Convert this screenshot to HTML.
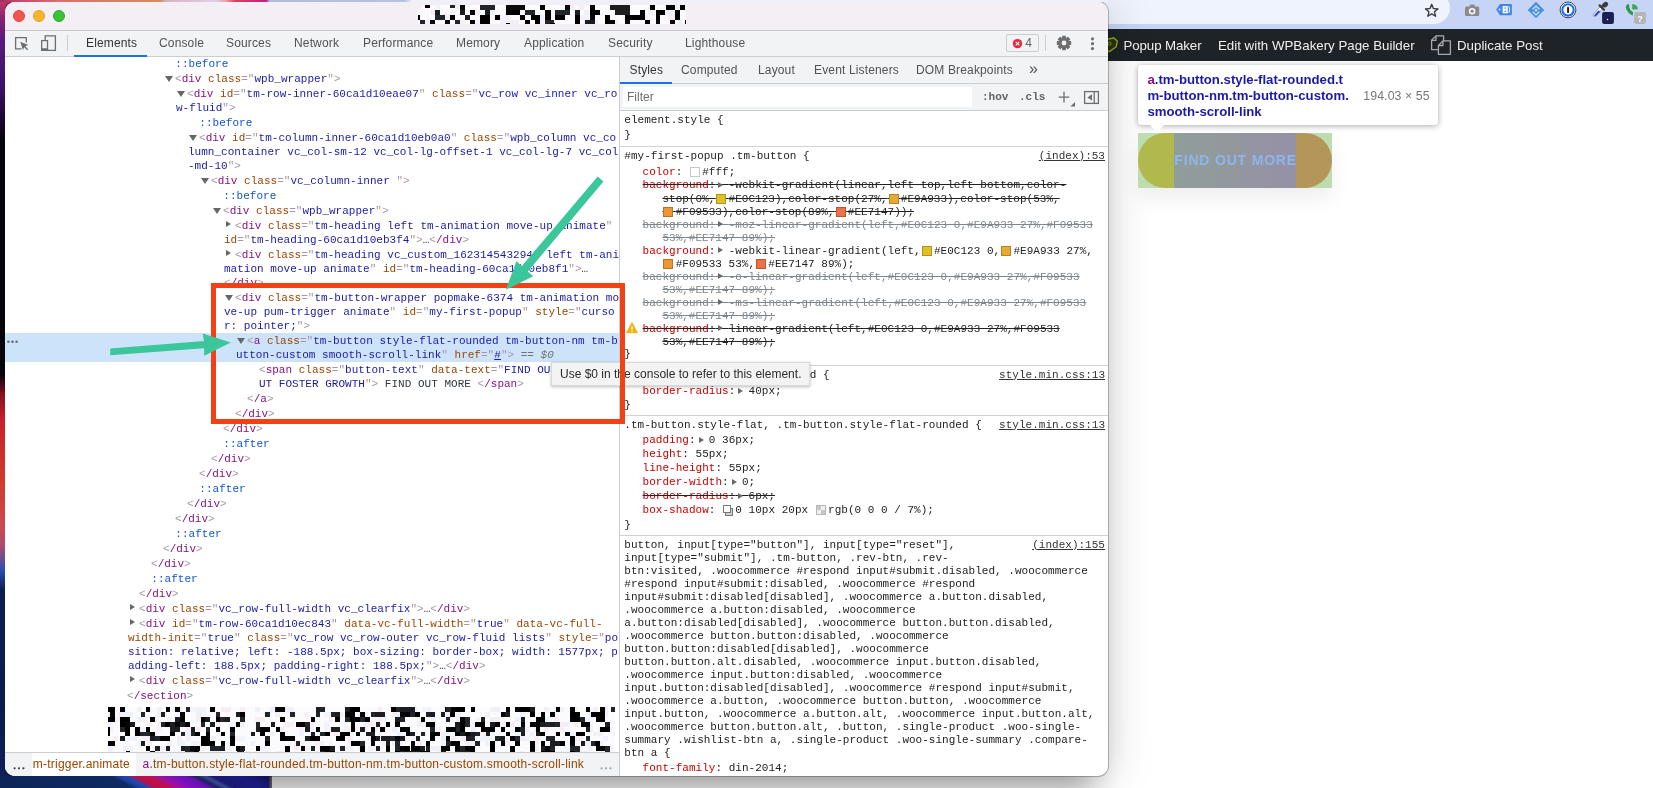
<!DOCTYPE html>
<html><head><meta charset="utf-8"><title>DevTools</title>
<style>
*{box-sizing:border-box}
html,body{margin:0;padding:0}
html{width:1653px;height:788px;overflow:hidden}
body{width:1653px;height:788px;overflow:hidden;position:relative;background:#fff;font-family:"Liberation Sans",sans-serif;font-size:12px;color:#333}
.abs{position:absolute}
/* wallpaper */
#wpL{left:0;top:0;width:14px;height:788px;background:linear-gradient(180deg,#c23c64 0,#8a2470 18px,#5a1a80 40px,#3c1064 90px,#1a0830 120px,#08040c 140px,#08040c 375px,#8a1020 395px,#c8202c 420px,#d03a2c 480px,#cc4a50 525px,#b04a70 545px,#2a50b0 570px,#0e1c50 590px,#0c1a4c 700px,#16286a 788px)}
#wpT{left:0;top:0;width:1120px;height:12px;background:linear-gradient(90deg,#a02a6a 0,#c8406a 14px,#d8706a 60px,#d98a5a 160px,#dcb0c0 166px,#e0d0e8 215px,#e8a0b0 226px,#e04060 235px,#c02080 266px,#aebde2 270px,#b4c2e6 405px,#eef1fa 412px,#eef1fa 1120px)}
#wpB{left:0;top:765px;width:272px;height:23px;background:linear-gradient(90deg,#0d2458 0,#10306a 95px,#1c3c90 116px,#8a1858 127px,#c01048 138px,#a010a0 156px,#7a10b0 185px,#2a1a60 200px,#1c1a48 230px,#2a2858 268px,#777 272px)}
#wpL2{left:0;top:0;width:5px;height:788px;background:linear-gradient(180deg,#c23c64 0,#8a2470 18px,#5a1a80 40px,#3c1064 90px,#1a0830 120px,#08040c 140px,#08040c 375px,#8a1020 395px,#c8202c 420px,#d03a2c 480px,#cc4a50 525px,#b04a70 545px,#2a50b0 570px,#0e1c50 590px,#0c1a4c 700px,#10205a 788px)}
#wpT2{left:0;top:0;width:1108px;height:2px;background:linear-gradient(90deg,#a02a6a 0,#c8406a 14px,#d8706a 60px,#d98a5a 160px,#dcb0c0 166px,#e0d0e8 215px,#e8a0b0 226px,#e04060 235px,#c02080 266px,#aebde2 270px,#b4c2e6 405px,#eef1fa 412px,#eef1fa 1108px)}
#wpB2w{left:0;top:776px;width:269px;height:13px;overflow:hidden}
#wpB2{left:-40px;top:0;width:340px;height:13px;transform-origin:0 0;transform:skewX(62deg);background:linear-gradient(90deg,#0d2458 0,#0e2a60 150px,#1a40a0 158px,#2048b0 166px,#b8104a 174px,#c01048 186px,#a010a0 198px,#7a10c0 212px,#6a10b0 226px,#1a2060 236px,#3a4a90 244px,#1a1a70 252px,#1a1a80 280px,#101050 310px,#101050 340px)}
/* browser right side */
#brTop{left:1100px;top:0;width:553px;height:29px;background:#c6d4f6}
#omni{left:1000px;top:-8px;width:450px;height:32px;background:#eff3fd;border-radius:0 16px 16px 0}
#blueband{display:none}
#admin{will-change:transform;left:1100px;top:29px;width:553px;height:32px;background:#1d2327;color:#f0f0f1;font-size:13.3px;line-height:32px;white-space:nowrap}
#admin span{position:absolute;top:0.7px}
/* devtools window */
#win{will-change:transform;left:5px;top:2px;width:1103px;height:774px;border-radius:10px;background:#fff;box-shadow:0 0 0 1px rgba(0,0,0,.25),0 2px 48px rgba(0,0,0,.18),0 28px 30px -14px rgba(0,0,0,.31);overflow:hidden}
#title{left:0;top:0;width:1103px;height:28px;background:#f3eff5}
#titleline{left:0;top:28px;width:1103px;height:1px;background:#c9c9cc}
.tl{position:absolute;top:8px;width:12px;height:12px;border-radius:50%}
#toolbar{left:0;top:29px;width:1103px;height:26px;background:#f1f3f4;border-bottom:1px solid #cacdd1}
.tab{position:absolute;top:0;height:26px;line-height:25px;font-size:12px;color:#505357;white-space:nowrap;letter-spacing:0.15px}
.tab.sel{color:#333}

#tree{left:0;top:54px;width:614px;height:690px;font-family:"Liberation Mono",monospace;font-size:11px;line-height:14px;white-space:pre;color:#303942;letter-spacing:0.02px}
.nd{position:absolute;left:0;width:614px}
.t{color:#881280}.b{color:#a894a6}.n{color:#994500}.v{color:#1a1aa6}.p{color:#1155cc}.x{color:#303942}
.g{color:#737373;font-style:italic}
.ar{position:absolute;width:0;height:0}
.ard{border-left:4px solid transparent;border-right:4px solid transparent;border-top:6px solid #666}
.arr{border-top:3.8px solid transparent;border-bottom:3.8px solid transparent;border-left:5.8px solid #666}
#selrow{left:0;top:277px;width:614px;height:29px;background:#cde3f9}

#crumbs{left:0;top:750px;width:614px;height:24px;background:#fff;border-top:1px solid #cacdd1;font-size:12px;line-height:22px;white-space:nowrap;color:#994500;letter-spacing:0.21px}
#crumbs div{position:absolute;top:0;height:23px}
.pix{position:absolute}
#tip0{will-change:transform;left:551px;top:362px;width:259px;height:24px;background:#f3f3f3;border:1px solid #d9d9d9;box-shadow:0 1px 3px rgba(0,0,0,.25);font-size:12px;line-height:22px;color:#2b2b2b;padding-left:8px;white-space:nowrap}
#redbox{left:211px;top:283px;width:414px;height:141px;border:5px solid #f24115}
#itip{will-change:transform;left:1138px;top:65px;width:300px;height:60px;background:#fff;border-radius:3px;box-shadow:0 1px 6px rgba(0,0,0,.32),0 0 1px rgba(0,0,0,.2)}
#itip .nm{position:absolute;left:9.4px;top:7px;font-weight:bold;font-size:13.2px;line-height:16px;color:#1a1aa6;white-space:pre}
#itip .dm{position:absolute;left:225.3px;top:23px;font-size:12.3px;letter-spacing:0.1px;line-height:16px;color:#777;white-space:pre}
#hl{will-change:transform;left:1138px;top:133px;width:194px;height:55px;background:#bfdcb0;overflow:hidden;box-shadow:0 10px 20px rgba(0,0,0,.07)}

#vdiv{left:614px;top:55px;width:1px;height:721px;background:#cacdd1}
#subtabs{left:615px;top:55px;width:488px;height:27px;background:#f1f3f4;border-bottom:1px solid #cacdd1}
#subtabs .tab{height:26px;line-height:26.4px}
#filterbar{left:615px;top:82px;width:488px;height:27px;background:#f1f3f4;border-bottom:1px solid #cacdd1}
#filterinput{left:3px;top:3px;width:349px;height:20px;background:#fff;color:#6e6e6e;font-size:12px;line-height:20px;padding-left:4px}
#sty{left:615px;top:0;width:488px;height:773px;font-family:"Liberation Mono",monospace;font-size:11px;line-height:13px;white-space:pre;color:#222;letter-spacing:0.02px}
.sl{position:absolute;height:13px}
.sep{position:absolute;left:0;width:488px;height:1px;background:#d0d3d6}
.pn{color:#c80000}
.st{text-decoration:line-through}
.in{color:#7d868c}.in .pn{color:#7d868c}
.src{position:absolute;right:3px;text-decoration:underline;color:#333}
.as{position:relative}
.as i{position:absolute;left:3px;top:2.6px;width:0;height:0;border-top:3.7px solid transparent;border-bottom:3.7px solid transparent;border-left:5.6px solid #6a6a6a}
.sw{position:relative}
.sw i{position:absolute;left:1px;top:1px;width:10px;height:10px;border:1px solid rgba(0,0,0,.22);z-index:2}
.chk i{border:1px solid #b8b8b8;background-color:#efefef;background-image:linear-gradient(#c6c6c6,#c6c6c6),linear-gradient(#c6c6c6,#c6c6c6);background-size:4px 4px;background-position:0 0,4px 4px;background-repeat:no-repeat}
.shd i{width:8px;height:8px;border:1px solid #777;background:#fff}
.shd b{position:absolute;left:3.2px;top:3.2px;width:8px;height:8px;border:1px solid #777;background:#cfcfcf;z-index:1}
</style></head>
<body>
<div id="wpL" class="abs"></div><div id="wpT" class="abs"></div><div id="wpB" class="abs"></div>
<div id="brTop" class="abs"></div><div id="blueband" class="abs"></div><div id="omni" class="abs"></div>
<div id="admin" class="abs"><span style="left:23.5px;letter-spacing:-0.1px">Popup Maker</span><span style="left:118px">Edit with WPBakery Page Builder</span><span style="left:357px">Duplicate Post</span></div>
<svg class="abs" style="left:1100px;top:0" width="553" height="62" viewBox="1100 0 553 62">
<polygon points="1431.70,4.30 1433.40,8.55 1437.98,8.86 1434.46,11.80 1435.58,16.24 1431.70,13.80 1427.82,16.24 1428.94,11.80 1425.42,8.86 1430.00,8.55" fill="none" stroke="#3c4043" stroke-width="1.4" stroke-linejoin="round"/>
<path d="M1466.5 6.6H1469.3L1470.4 4.6H1474L1475.1 6.6H1477.7Q1479.2 6.6 1479.2 8.1V14.4Q1479.2 15.9 1477.7 15.9H1466.5Q1465 15.9 1465 14.4V8.1Q1465 6.6 1466.5 6.6Z" fill="#8a8a8a"/><circle cx="1472.1" cy="11.2" r="3.3" fill="#f4f6fd"/><circle cx="1472.1" cy="11.2" r="1.6" fill="#8a8a8a"/>
<path d="M1496.2 9.5L1500 4H1510.6Q1511.9 4 1511.9 5.3V13.9Q1511.9 15.2 1510.6 15.2H1500Z" fill="#4285e8"/><circle cx="1499.6" cy="9.5" r=".9" fill="#fff"/><rect x="1502.6" y="6" width="5.2" height="7.3" fill="#f4f7fe"/><circle cx="1505.2" cy="8" r=".8" fill="#4285e8"/><circle cx="1505.2" cy="11.3" r=".8" fill="#4285e8"/><path d="M1508.9 6.3Q1510.4 9.6 1508.9 12.9" stroke="#fff" stroke-width="1" fill="none"/>
<path d="M1536 1.8L1544.2 10L1536 18.2L1527.8 10Z" fill="#4a8fe6"/><path d="M1532.6 9.2L1536 6L1539.4 9.2M1532.6 11.8L1536 15L1539.4 11.8" stroke="#d6e6fb" stroke-width="1.2" fill="none"/><path d="M1536 8.6L1537.5 10.2L1536 11.8L1534.5 10.2Z" fill="#d6e6fb"/>
<circle cx="1568" cy="9.9" r="7.9" fill="#fff" stroke="#1a1a1a" stroke-width=".8"/><circle cx="1568" cy="9.9" r="5.7" fill="#fff" stroke="#1a6ee8" stroke-width="2.1"/><rect x="1567.1" y="6.9" width="1.9" height="6" rx=".7" fill="#1a1a1a"/>
<path d="M1593.6 16.2L1593.2 14.4L1600 7L1602.2 9.1L1595.4 16.4Z" fill="#fff" stroke="#8a8a8a" stroke-width=".7" stroke-linejoin="round"/><path d="M1594 15.2L1598.6 10.3L1600.2 11.8L1595.6 16.5Z" fill="#2a44d8"/>
<path d="M1599.6 5.4L1604 9.8" stroke="#3a3a3a" stroke-width="2.2" stroke-linecap="round"/><path d="M1601.6 7.4L1604.2 4.4" stroke="#3a3a3a" stroke-width="2.6"/><ellipse cx="1605.3" cy="4.6" rx="3" ry="2.4" transform="rotate(-42 1605.3 4.6)" fill="#3a3a3a"/>
<rect x="1602.1" y="12" width="11.8" height="11.9" rx="2" fill="#1c1f52"/><circle cx="1607.5" cy="19.4" r=".75" fill="#fff"/>
<path d="M1626.9 4.6Q1625.2 6.5 1626.4 9.6Q1628.2 13.8 1632.6 15.8L1633.2 12.6Q1630 10.6 1629.3 7.4Q1629.4 5.6 1628.9 4.3Z" fill="#2a9a42"/><path d="M1632.2 4.1Q1637.3 4.3 1638 9.3L1632.3 9.4Z" fill="#35a84a"/>
<rect x="1634.2" y="12" width="11.7" height="11.9" rx="2" fill="#b5b5b5"/><text x="1640.1" y="21.6" font-family="Liberation Sans" font-size="9" font-weight="bold" fill="#fff" text-anchor="middle">?</text>
<path d="M1106.5 39.5L1113.6 37.8L1117.3 41L1116.2 46.8L1109.4 51.6L1105 49Z" fill="#2c3310" stroke="#9aae1e" stroke-width="1.3" stroke-linejoin="round"/><circle cx="1109.5" cy="43.6" r="1.5" fill="none" stroke="#9aae1e" stroke-width="1"/>
<g fill="#1d2327" stroke="#a7aaad" stroke-width="1.3" stroke-linejoin="round"><path d="M1436 35.9H1443.6V49.6H1431.6V40.3Z"/><path d="M1436 35.9V40.3H1431.6" fill="none"/><path d="M1443 40.9H1450.4V54.3H1438.4V45.5Z"/><path d="M1443 40.9V45.5H1438.4" fill="none"/></g>
</svg>
<div id="win" class="abs">
<div id="title" class="abs"><div class="tl" style="left:8px;background:#f4544f;border:0.5px solid #dd4842"></div><div class="tl" style="left:28px;background:#f6b429;border:0.5px solid #dfa023"></div><div class="tl" style="left:48px;background:#3cc13b;border:0.5px solid #2fa92e"></div></div>
<div id="titleline" class="abs"></div>
<div id="toolbar" class="abs"><div class="tab sel" style="left:81px">Elements</div><div class="tab" style="left:154px">Console</div><div class="tab" style="left:221px">Sources</div><div class="tab" style="left:289px">Network</div><div class="tab" style="left:358px">Performance</div><div class="tab" style="left:451px">Memory</div><div class="tab" style="left:519px">Application</div><div class="tab" style="left:603px">Security</div><div class="tab" style="left:680px">Lighthouse</div><div class="abs" style="left:69px;top:24px;width:73px;height:2px;background:#1a73e8"></div></div>
<div id="tree" class="abs"><div id="selrow" class="abs"></div>
<div class="nd" style="top:0px;padding:1px 0 0 159px;text-indent:11.3px"><span class="p">::before</span></div>
<div class="nd" style="top:15px;padding:1px 0 0 159px;text-indent:11.0px"><i class="ar ard" style="left:159.6px;top:5px"></i><span class="b">&lt;</span><span class="t">div </span><span class="n">class</span><span class="b">="</span><span class="v">wpb_wrapper</span><span class="b">"&gt;</span></div>
<div class="nd" style="top:30px;padding:1px 0 0 171px;text-indent:11.0px"><i class="ar ard" style="left:171.6px;top:5px"></i><span class="b">&lt;</span><span class="t">div </span><span class="n">id</span><span class="b">="</span><span class="v">tm-row-inner-60ca1d10eae07</span><span class="b">"</span><span class="n"> class</span><span class="b">="</span><span class="v">vc_row vc_inner vc_ro</span>
<span class="v">w-fluid</span><span class="b">"&gt;</span></div>
<div class="nd" style="top:59px;padding:1px 0 0 183px;text-indent:11.3px"><span class="p">::before</span></div>
<div class="nd" style="top:74px;padding:1px 0 0 183px;text-indent:11.0px"><i class="ar ard" style="left:183.6px;top:5px"></i><span class="b">&lt;</span><span class="t">div </span><span class="n">id</span><span class="b">="</span><span class="v">tm-column-inner-60ca1d10eb0a0</span><span class="b">"</span><span class="n"> class</span><span class="b">="</span><span class="v">wpb_column vc_co</span>
<span class="v">lumn_container vc_col-sm-12 vc_col-lg-offset-1 vc_col-lg-7 vc_col</span>
<span class="v">-md-10</span><span class="b">"&gt;</span></div>
<div class="nd" style="top:117px;padding:1px 0 0 195px;text-indent:11.0px"><i class="ar ard" style="left:195.6px;top:5px"></i><span class="b">&lt;</span><span class="t">div </span><span class="n">class</span><span class="b">="</span><span class="v">vc_column-inner </span><span class="b">"&gt;</span></div>
<div class="nd" style="top:132px;padding:1px 0 0 207px;text-indent:11.3px"><span class="p">::before</span></div>
<div class="nd" style="top:147px;padding:1px 0 0 207px;text-indent:11.0px"><i class="ar ard" style="left:207.6px;top:5px"></i><span class="b">&lt;</span><span class="t">div </span><span class="n">class</span><span class="b">="</span><span class="v">wpb_wrapper</span><span class="b">"&gt;</span></div>
<div class="nd" style="top:162px;padding:1px 0 0 219px;text-indent:11.0px"><i class="ar arr" style="left:220.8px;top:3.3px"></i><span class="b">&lt;</span><span class="t">div </span><span class="n">class</span><span class="b">="</span><span class="v">tm-heading left tm-animation move-up animate</span><span class="b">"</span>
<span class="n">id</span><span class="b">="</span><span class="v">tm-heading-60ca1d10eb3f4</span><span class="b">"&gt;</span><span class="x">…</span><span class="b">&lt;</span><span class="t">/div</span><span class="b">&gt;</span></div>
<div class="nd" style="top:191px;padding:1px 0 0 219px;text-indent:11.0px"><i class="ar arr" style="left:220.8px;top:3.3px"></i><span class="b">&lt;</span><span class="t">div </span><span class="n">class</span><span class="b">="</span><span class="v">tm-heading vc_custom_1623145432947 left tm-ani</span>
<span class="v">mation move-up animate</span><span class="b">"</span><span class="n"> id</span><span class="b">="</span><span class="v">tm-heading-60ca1d10eb8f1</span><span class="b">"&gt;</span><span class="x">…</span>
<span class="b">&lt;</span><span class="t">/div</span><span class="b">&gt;</span></div>
<div class="nd" style="top:234px;padding:1px 0 0 219px;text-indent:11.0px"><i class="ar ard" style="left:219.6px;top:5px"></i><span class="b">&lt;</span><span class="t">div </span><span class="n">class</span><span class="b">="</span><span class="v">tm-button-wrapper popmake-6374 tm-animation mo</span>
<span class="v">ve-up pum-trigger animate</span><span class="b">"</span><span class="n"> id</span><span class="b">="</span><span class="v">my-first-popup</span><span class="b">"</span><span class="n"> style</span><span class="b">="</span><span class="v">curso</span>
<span class="v">r: pointer;</span><span class="b">"&gt;</span></div>
<div class="nd" style="top:277px;padding:1px 0 0 231px;text-indent:11.0px"><i class="ar ard" style="left:231.6px;top:5px"></i><span class="b">&lt;</span><span class="t">a </span><span class="n">class</span><span class="b">="</span><span class="v">tm-button style-flat-rounded tm-button-nm tm-b</span>
<span class="v">utton-custom smooth-scroll-link</span><span class="b">"</span><span class="n"> href</span><span class="b">="</span><span class="v" style="text-decoration:underline">#</span><span class="b">"&gt;</span><span class="g"> == $0</span></div>
<div class="nd" style="top:306px;padding:1px 0 0 254px;text-indent:0.0px"><span class="b">&lt;</span><span class="t">span </span><span class="n">class</span><span class="b">="</span><span class="v">button-text</span><span class="b">"</span><span class="n"> data-text</span><span class="b">="</span><span class="v">FIND OUT MORE ABO</span>
<span class="v">UT FOSTER GROWTH</span><span class="b">"&gt;</span><span class="x"> FIND OUT MORE </span><span class="b">&lt;</span><span class="t">/span</span><span class="b">&gt;</span></div>
<div class="nd" style="top:335px;padding:1px 0 0 231px;text-indent:11.0px"><span class="b">&lt;</span><span class="t">/a</span><span class="b">&gt;</span></div>
<div class="nd" style="top:350px;padding:1px 0 0 219px;text-indent:11.0px"><span class="b">&lt;</span><span class="t">/div</span><span class="b">&gt;</span></div>
<div class="nd" style="top:365px;padding:1px 0 0 207px;text-indent:11.0px"><span class="b">&lt;</span><span class="t">/div</span><span class="b">&gt;</span></div>
<div class="nd" style="top:380px;padding:1px 0 0 207px;text-indent:11.3px"><span class="p">::after</span></div>
<div class="nd" style="top:395px;padding:1px 0 0 195px;text-indent:11.0px"><span class="b">&lt;</span><span class="t">/div</span><span class="b">&gt;</span></div>
<div class="nd" style="top:410px;padding:1px 0 0 183px;text-indent:11.0px"><span class="b">&lt;</span><span class="t">/div</span><span class="b">&gt;</span></div>
<div class="nd" style="top:425px;padding:1px 0 0 183px;text-indent:11.3px"><span class="p">::after</span></div>
<div class="nd" style="top:440px;padding:1px 0 0 171px;text-indent:11.0px"><span class="b">&lt;</span><span class="t">/div</span><span class="b">&gt;</span></div>
<div class="nd" style="top:455px;padding:1px 0 0 159px;text-indent:11.0px"><span class="b">&lt;</span><span class="t">/div</span><span class="b">&gt;</span></div>
<div class="nd" style="top:470px;padding:1px 0 0 159px;text-indent:11.3px"><span class="p">::after</span></div>
<div class="nd" style="top:485px;padding:1px 0 0 147px;text-indent:11.0px"><span class="b">&lt;</span><span class="t">/div</span><span class="b">&gt;</span></div>
<div class="nd" style="top:500px;padding:1px 0 0 135px;text-indent:11.0px"><span class="b">&lt;</span><span class="t">/div</span><span class="b">&gt;</span></div>
<div class="nd" style="top:515px;padding:1px 0 0 135px;text-indent:11.3px"><span class="p">::after</span></div>
<div class="nd" style="top:530px;padding:1px 0 0 123px;text-indent:11.0px"><span class="b">&lt;</span><span class="t">/div</span><span class="b">&gt;</span></div>
<div class="nd" style="top:545px;padding:1px 0 0 123px;text-indent:11.0px"><i class="ar arr" style="left:124.8px;top:3.3px"></i><span class="b">&lt;</span><span class="t">div </span><span class="n">class</span><span class="b">="</span><span class="v">vc_row-full-width vc_clearfix</span><span class="b">"&gt;</span><span class="x">…</span><span class="b">&lt;</span><span class="t">/div</span><span class="b">&gt;</span></div>
<div class="nd" style="top:560px;padding:1px 0 0 123px;text-indent:11.0px"><i class="ar arr" style="left:124.8px;top:3.3px"></i><span class="b">&lt;</span><span class="t">div </span><span class="n">id</span><span class="b">="</span><span class="v">tm-row-60ca1d10ec843</span><span class="b">"</span><span class="n"> data-vc-full-width</span><span class="b">="</span><span class="v">true</span><span class="b">"</span><span class="n"> data-vc-full-</span>
<span class="n">width-init</span><span class="b">="</span><span class="v">true</span><span class="b">"</span><span class="n"> class</span><span class="b">="</span><span class="v">vc_row vc_row-outer vc_row-fluid lists</span><span class="b">"</span><span class="n"> style</span><span class="b">="</span><span class="v">po</span>
<span class="v">sition: relative; left: -188.5px; box-sizing: border-box; width: 1577px; p</span>
<span class="v">adding-left: 188.5px; padding-right: 188.5px;</span><span class="b">"&gt;</span><span class="x">…</span><span class="b">&lt;</span><span class="t">/div</span><span class="b">&gt;</span></div>
<div class="nd" style="top:617px;padding:1px 0 0 123px;text-indent:11.0px"><i class="ar arr" style="left:124.8px;top:3.3px"></i><span class="b">&lt;</span><span class="t">div </span><span class="n">class</span><span class="b">="</span><span class="v">vc_row-full-width vc_clearfix</span><span class="b">"&gt;</span><span class="x">…</span><span class="b">&lt;</span><span class="t">/div</span><span class="b">&gt;</span></div>
<div class="nd" style="top:632px;padding:1px 0 0 111px;text-indent:11.0px"><span class="b">&lt;</span><span class="t">/section</span><span class="b">&gt;</span></div>
</div>
<div id="vdiv" class="abs"></div>
<div id="subtabs" class="abs">
<div class="tab sel" style="left:9.5px">Styles</div>
<div class="tab" style="left:61.0px">Computed</div>
<div class="tab" style="left:138.0px">Layout</div>
<div class="tab" style="left:194.0px">Event Listeners</div>
<div class="tab" style="left:296.0px">DOM Breakpoints</div>
<div class="abs" style="left:0;top:24.5px;width:52px;height:2px;background:#1a73e8"></div>
<div class="tab" style="left:409px;font-size:16px;line-height:23px">»</div>
</div>
<div id="filterbar" class="abs"><div id="filterinput" class="abs">Filter</div>
<div class="abs" style="left:362px;top:0;line-height:27px;font-family:'Liberation Mono',monospace;font-size:11px;font-weight:bold;color:#5f6368">:hov</div>
<div class="abs" style="left:399px;top:0;line-height:27px;font-family:'Liberation Mono',monospace;font-size:11px;font-weight:bold;color:#5f6368">.cls</div>
</div>
<div id="sty" class="abs">
<div class="sl " style="left:4.3px;top:111.65px">element.style {</div>
<div class="sl " style="left:4.3px;top:127.45px">}</div>
<div class="sep" style="top:143.5px"></div>
<div class="sl " style="left:4.3px;top:147.85px">#my-first-popup .tm-button {</div>
<div class="sl src" style="top:147.85px">(index):53</div>
<div class="sl " style="left:22.6px;top:163.65px"><span class="pn">color</span>: <span class="sw">  <i style="background:#fff"></i></span>#fff;</div>
<div class="sl st" style="left:22.6px;top:177.45px"><span class="pn">background</span>:<span class="as">  <i></i></span>-webkit-gradient(linear,left top,left bottom,color-</div>
<div class="sl st" style="left:42.4px;top:190.65px">stop(0%,<span class="sw">  <i style="background:#E0C123"></i></span>#E0C123),color-stop(27%,<span class="sw">  <i style="background:#E9A933"></i></span>#E9A933),color-stop(53%,</div>
<div class="sl st" style="left:42.4px;top:203.65px"><span class="sw">  <i style="background:#F09533"></i></span>#F09533),color-stop(89%,<span class="sw">  <i style="background:#EE7147"></i></span>#EE7147));</div>
<div class="sl st in" style="left:22.6px;top:216.65px"><span class="pn">background</span>:<span class="as">  <i></i></span>-moz-linear-gradient(left,#E0C123 0,#E9A933 27%,#F09533</div>
<div class="sl st in" style="left:42.4px;top:229.65px">53%,#EE7147 89%);</div>
<div class="sl " style="left:22.6px;top:242.65px"><span class="pn">background</span>:<span class="as">  <i></i></span>-webkit-linear-gradient(left,<span class="sw">  <i style="background:#E0C123"></i></span>#E0C123 0,<span class="sw">  <i style="background:#E9A933"></i></span>#E9A933 27%,</div>
<div class="sl " style="left:42.4px;top:255.65px"><span class="sw">  <i style="background:#F09533"></i></span>#F09533 53%,<span class="sw">  <i style="background:#EE7147"></i></span>#EE7147 89%);</div>
<div class="sl st in" style="left:22.6px;top:268.65px"><span class="pn">background</span>:<span class="as">  <i></i></span>-o-linear-gradient(left,#E0C123 0,#E9A933 27%,#F09533</div>
<div class="sl st in" style="left:42.4px;top:281.65px">53%,#EE7147 89%);</div>
<div class="sl st in" style="left:22.6px;top:294.65px"><span class="pn">background</span>:<span class="as">  <i></i></span>-ms-linear-gradient(left,#E0C123 0,#E9A933 27%,#F09533</div>
<div class="sl st in" style="left:42.4px;top:307.65px">53%,#EE7147 89%);</div>
<div class="sl st" style="left:22.6px;top:320.65px"><span class="pn">background</span>:<span class="as">  <i></i></span>linear-gradient(left,#E0C123 0,#E9A933 27%,#F09533</div>
<div class="sl st" style="left:42.4px;top:333.85px">53%,#EE7147 89%);</div>
<div class="sl " style="left:4.3px;top:346.45px">}</div>
<div class="sep" style="top:363.2px"></div>
<div class="sl " style="left:4.3px;top:366.75px">.tm-button.style-flat-rounded {</div>
<div class="sl src" style="top:366.75px">style.min.css:13</div>
<div class="sl " style="left:22.6px;top:382.95px"><span class="pn">border-radius</span>:<span class="as">  <i></i></span>40px;</div>
<div class="sl " style="left:4.3px;top:396.95px">}</div>
<div class="sep" style="top:413.3px"></div>
<div class="sl " style="left:4.3px;top:416.85px">.tm-button.style-flat, .tm-button.style-flat-rounded {</div>
<div class="sl src" style="top:416.85px">style.min.css:13</div>
<div class="sl " style="left:22.6px;top:432.25px"><span class="pn">padding</span>:<span class="as">  <i></i></span>0 36px;</div>
<div class="sl " style="left:22.6px;top:446.25px"><span class="pn">height</span>: 55px;</div>
<div class="sl " style="left:22.6px;top:460.35px"><span class="pn">line-height</span>: 55px;</div>
<div class="sl " style="left:22.6px;top:474.35px"><span class="pn">border-width</span>:<span class="as">  <i></i></span>0;</div>
<div class="sl st" style="left:22.6px;top:488.35px"><span class="pn">border-radius</span>:<span class="as">  <i></i></span>6px;</div>
<div class="sl " style="left:22.6px;top:502.35px"><span class="pn">box-shadow</span>: <span class="sw shd">  <i></i><b></b></span>0 10px 20px <span class="sw chk">  <i></i></span>rgb(0 0 0 / 7%);</div>
<div class="sl " style="left:4.3px;top:516.85px">}</div>
<div class="sep" style="top:532.6px"></div>
<div class="sl " style="left:4.3px;top:536.55px">button, input[type="button"], input[type="reset"],</div>
<div class="sl " style="left:4.3px;top:549.57px">input[type="submit"], .tm-button, .rev-btn, .rev-</div>
<div class="sl " style="left:4.3px;top:562.59px">btn:visited, .woocommerce #respond input#submit.disabled, .woocommerce</div>
<div class="sl " style="left:4.3px;top:575.61px">#respond input#submit:disabled, .woocommerce #respond</div>
<div class="sl " style="left:4.3px;top:588.63px">input#submit:disabled[disabled], .woocommerce a.button.disabled,</div>
<div class="sl " style="left:4.3px;top:601.65px">.woocommerce a.button:disabled, .woocommerce</div>
<div class="sl " style="left:4.3px;top:614.67px">a.button:disabled[disabled], .woocommerce button.button.disabled,</div>
<div class="sl " style="left:4.3px;top:627.69px">.woocommerce button.button:disabled, .woocommerce</div>
<div class="sl " style="left:4.3px;top:640.71px">button.button:disabled[disabled], .woocommerce</div>
<div class="sl " style="left:4.3px;top:653.73px">button.button.alt.disabled, .woocommerce input.button.disabled,</div>
<div class="sl " style="left:4.3px;top:666.75px">.woocommerce input.button:disabled, .woocommerce</div>
<div class="sl " style="left:4.3px;top:679.77px">input.button:disabled[disabled], .woocommerce #respond input#submit,</div>
<div class="sl " style="left:4.3px;top:692.79px">.woocommerce a.button, .woocommerce button.button, .woocommerce</div>
<div class="sl " style="left:4.3px;top:705.81px">input.button, .woocommerce a.button.alt, .woocommerce input.button.alt,</div>
<div class="sl " style="left:4.3px;top:718.83px">.woocommerce button.button.alt, .button, .single-product .woo-single-</div>
<div class="sl " style="left:4.3px;top:731.85px">summary .wishlist-btn a, .single-product .woo-single-summary .compare-</div>
<div class="sl " style="left:4.3px;top:744.87px">btn a {</div>
<div class="sl src" style="top:536.55px">(index):155</div>
<div class="sl " style="left:22.6px;top:760.35px"><span class="pn">font-family</span>: din-2014;</div>
</div>
<svg class="abs" style="left:0;top:29px" width="80" height="27" viewBox="5 31 80 27" fill="none" stroke="#6e6e6e" stroke-width="1.3">
<path d="M21.5 48.9H15.6V37.7H26.3V42.5"/>
<path d="M20.2 41.8L28.3 44.9L25.2 46.2L28.2 49.3L27.2 50.3L24.2 47.2L22.9 50Z" fill="#6e6e6e" stroke="none"/>
<path d="M45.2 40.2V35.9H55.4V50.3H47.6"/><rect x="41.7" y="40.6" width="5.8" height="9.7" /><path d="M41.7 49.2H47.5" stroke-width="2"/>
<path d="M67.5 35V51" stroke="#cacdd1" stroke-width="1"/>
</svg>
<div class="abs" style="left:1001px;top:32.3px;width:33px;height:17.7px;border:1px solid #cacdd1;border-radius:2px"></div>
<svg class="abs" style="left:1006px;top:35px" width="14" height="14" viewBox="0 0 14 14"><circle cx="6.5" cy="6.6" r="4.7" fill="#e8283c"/><path d="M4.7 4.8L8.3 8.4M8.3 4.8L4.7 8.4" stroke="#fff" stroke-width="1.1"/></svg>
<div class="abs" style="left:1020.3px;top:33px;font-size:12px;line-height:17px;color:#5f6368">4</div>
<div class="abs" style="left:1039.7px;top:33px;width:1px;height:16px;background:#cacdd1"></div>
<svg class="abs" style="left:1051px;top:33px" width="16" height="16" viewBox="-8 -8 16 16"><g fill="#6e6e6e"><rect x="-1.9" y="-7.2" width="3.8" height="4" rx=".6" transform="rotate(0)"/><rect x="-1.9" y="-7.2" width="3.8" height="4" rx=".6" transform="rotate(45)"/><rect x="-1.9" y="-7.2" width="3.8" height="4" rx=".6" transform="rotate(90)"/><rect x="-1.9" y="-7.2" width="3.8" height="4" rx=".6" transform="rotate(135)"/><rect x="-1.9" y="-7.2" width="3.8" height="4" rx=".6" transform="rotate(180)"/><rect x="-1.9" y="-7.2" width="3.8" height="4" rx=".6" transform="rotate(225)"/><rect x="-1.9" y="-7.2" width="3.8" height="4" rx=".6" transform="rotate(270)"/><rect x="-1.9" y="-7.2" width="3.8" height="4" rx=".6" transform="rotate(315)"/></g><circle r="4.0" fill="none" stroke="#6e6e6e" stroke-width="3.1"/></svg>
<svg class="abs" style="left:1083px;top:33px" width="10" height="18" viewBox="0 0 10 18" fill="#6e6e6e"><circle cx="4.5" cy="3.8" r="1.6"/><circle cx="4.5" cy="8.7" r="1.6"/><circle cx="4.5" cy="13.6" r="1.6"/></svg>
<svg class="abs" style="left:1050px;top:84px" width="50" height="24" viewBox="1055 86 50 24" fill="none" stroke="#6e6e6e" stroke-width="1.3">
<path d="M1064 91.8V102.4M1058.7 97.1H1069.3"/><path d="M1075 102V106.6H1070.4Z" fill="#6e6e6e" stroke="none"/>
<rect x="1084.6" y="91.6" width="13.8" height="11.8"/><path d="M1094.2 91.6V103.4"/><path d="M1092 94.3V100.5L1087.4 97.4Z" fill="#6e6e6e" stroke="none"/>
</svg>
<svg class="abs" style="left:2px;top:337px" width="14" height="6" viewBox="0 0 14 6" fill="#6b6b6b"><circle cx="1.4" cy="2.7" r="1.3"/><circle cx="5.5" cy="2.7" r="1.3"/><circle cx="9.6" cy="2.7" r="1.3"/></svg>
<svg class="abs" style="left:620.5px;top:319.5px" width="12" height="12" viewBox="0 0 12 12"><path d="M6 0.6L11.6 10.8H0.4Z" fill="#f2b400" stroke="#d99e00" stroke-width=".5" stroke-linejoin="round"/><path d="M6 4.2V7.6" stroke="#fff" stroke-width="1.3"/><circle cx="6" cy="9.1" r=".75" fill="#fff"/></svg>
<div id="crumbs" class="abs">
<div style="left:0;width:27px;background:#f1f3f4"></div>
<div style="left:27px;width:104px;overflow:hidden"><span style="position:absolute;right:6.2px;top:0">div#my-first-popup.tm-button-wrapper.popmake-6374.tm-animation.move-up.pum-trigger.animate</span></div>
<div style="left:131px;width:456.5px;background:#f1f3f4"><span style="position:absolute;left:6.6px;top:0"><span style="color:#881280">a</span>.tm-button.style-flat-rounded.tm-button-nm.tm-button-custom.smooth-scroll-link</span></div>
<div style="left:587.5px;width:26.5px;background:#f1f3f4"></div>
</div>
<svg class="abs" style="left:8px;top:763px" width="14" height="6" viewBox="0 0 14 6" fill="#444"><circle cx="1.6" cy="3.3" r="1.1"/><circle cx="6" cy="3.3" r="1.1"/><circle cx="10.4" cy="3.3" r="1.1"/></svg>
<svg class="abs" style="left:595px;top:763px" width="14" height="6" viewBox="0 0 14 6" fill="#a0a4a8"><circle cx="1.6" cy="3.3" r="1.1"/><circle cx="6" cy="3.3" r="1.1"/><circle cx="10.4" cy="3.3" r="1.1"/></svg>
<svg class="pix" style="left:413px;top:3px" width="268" height="19" viewBox="0 0 268 19" shape-rendering="crispEdges"><rect width="100%" height="100%" fill="#fbfbfe"/><rect x="-2.3" y="0.0" width="4.95" height="4.9" fill="#f6eef3"/><rect x="17.5" y="0.0" width="4.95" height="4.9" fill="#f1f4fc"/><rect x="37.2" y="0.0" width="4.95" height="4.9" fill="#f4f0f6"/><rect x="61.9" y="0.0" width="4.95" height="4.9" fill="#f6eef3"/><rect x="86.6" y="0.0" width="4.95" height="4.9" fill="#f1f4fc"/><rect x="96.5" y="0.0" width="4.95" height="4.9" fill="#eef1fa"/><rect x="150.8" y="0.0" width="4.95" height="4.9" fill="#f6eef3"/><rect x="160.7" y="0.0" width="4.95" height="4.9" fill="#f4f0f6"/><rect x="200.2" y="0.0" width="4.95" height="4.9" fill="#eef1fa"/><rect x="229.9" y="0.0" width="4.95" height="4.9" fill="#eef1fa"/><rect x="254.6" y="0.0" width="4.95" height="4.9" fill="#eef1fa"/><rect x="259.5" y="0.0" width="4.95" height="4.9" fill="#f1f4fc"/><rect x="12.5" y="4.9" width="4.95" height="4.9" fill="#f6eef3"/><rect x="17.5" y="4.9" width="4.95" height="4.9" fill="#f4f0f6"/><rect x="32.3" y="4.9" width="4.95" height="4.9" fill="#f1f4fc"/><rect x="57.0" y="4.9" width="4.95" height="4.9" fill="#f6eef3"/><rect x="71.8" y="4.9" width="4.95" height="4.9" fill="#f1f4fc"/><rect x="86.6" y="4.9" width="4.95" height="4.9" fill="#eef1fa"/><rect x="91.6" y="4.9" width="4.95" height="4.9" fill="#f1f4fc"/><rect x="111.3" y="4.9" width="4.95" height="4.9" fill="#f4f0f6"/><rect x="141.0" y="4.9" width="4.95" height="4.9" fill="#eef1fa"/><rect x="155.8" y="4.9" width="4.95" height="4.9" fill="#eef1fa"/><rect x="165.7" y="4.9" width="4.95" height="4.9" fill="#eef1fa"/><rect x="175.5" y="4.9" width="4.95" height="4.9" fill="#f4f0f6"/><rect x="200.2" y="4.9" width="4.95" height="4.9" fill="#eef1fa"/><rect x="229.9" y="4.9" width="4.95" height="4.9" fill="#f1f4fc"/><rect x="239.8" y="4.9" width="4.95" height="4.9" fill="#eef1fa"/><rect x="244.7" y="4.9" width="4.95" height="4.9" fill="#f4f0f6"/><rect x="249.6" y="4.9" width="4.95" height="4.9" fill="#eef1fa"/><rect x="254.6" y="4.9" width="4.95" height="4.9" fill="#f6eef3"/><rect x="17.5" y="9.8" width="4.95" height="4.9" fill="#f6eef3"/><rect x="27.3" y="9.8" width="4.95" height="4.9" fill="#eef1fa"/><rect x="32.3" y="9.8" width="4.95" height="4.9" fill="#f6eef3"/><rect x="47.1" y="9.8" width="4.95" height="4.9" fill="#eef1fa"/><rect x="61.9" y="9.8" width="4.95" height="4.9" fill="#f6eef3"/><rect x="66.9" y="9.8" width="4.95" height="4.9" fill="#f6eef3"/><rect x="81.7" y="9.8" width="4.95" height="4.9" fill="#f1f4fc"/><rect x="86.6" y="9.8" width="4.95" height="4.9" fill="#f6eef3"/><rect x="121.2" y="9.8" width="4.95" height="4.9" fill="#eef1fa"/><rect x="155.8" y="9.8" width="4.95" height="4.9" fill="#f4f0f6"/><rect x="160.7" y="9.8" width="4.95" height="4.9" fill="#f4f0f6"/><rect x="165.7" y="9.8" width="4.95" height="4.9" fill="#f1f4fc"/><rect x="205.2" y="9.8" width="4.95" height="4.9" fill="#f4f0f6"/><rect x="224.9" y="9.8" width="4.95" height="4.9" fill="#eef1fa"/><rect x="249.6" y="9.8" width="4.95" height="4.9" fill="#f6eef3"/><rect x="254.6" y="9.8" width="4.95" height="4.9" fill="#f6eef3"/><rect x="2.6" y="14.7" width="4.95" height="4.9" fill="#f1f4fc"/><rect x="7.6" y="14.7" width="4.95" height="4.9" fill="#eef1fa"/><rect x="12.5" y="14.7" width="4.95" height="4.9" fill="#f1f4fc"/><rect x="42.2" y="14.7" width="4.95" height="4.9" fill="#f4f0f6"/><rect x="52.0" y="14.7" width="4.95" height="4.9" fill="#f6eef3"/><rect x="57.0" y="14.7" width="4.95" height="4.9" fill="#f1f4fc"/><rect x="61.9" y="14.7" width="4.95" height="4.9" fill="#eef1fa"/><rect x="81.7" y="14.7" width="4.95" height="4.9" fill="#f4f0f6"/><rect x="86.6" y="14.7" width="4.95" height="4.9" fill="#eef1fa"/><rect x="91.6" y="14.7" width="4.95" height="4.9" fill="#f4f0f6"/><rect x="96.5" y="14.7" width="4.95" height="4.9" fill="#eef1fa"/><rect x="106.4" y="14.7" width="4.95" height="4.9" fill="#f1f4fc"/><rect x="116.3" y="14.7" width="4.95" height="4.9" fill="#f1f4fc"/><rect x="121.2" y="14.7" width="4.95" height="4.9" fill="#f1f4fc"/><rect x="131.1" y="14.7" width="4.95" height="4.9" fill="#f4f0f6"/><rect x="165.7" y="14.7" width="4.95" height="4.9" fill="#eef1fa"/><rect x="175.5" y="14.7" width="4.95" height="4.9" fill="#f1f4fc"/><rect x="190.4" y="14.7" width="4.95" height="4.9" fill="#f6eef3"/><rect x="195.3" y="14.7" width="4.95" height="4.9" fill="#f4f0f6"/><rect x="259.5" y="14.7" width="4.95" height="4.9" fill="#eef1fa"/><rect x="7.4" y="-0.0" width="4.7" height="2.5" fill="#000"/><rect x="32.4" y="-0.0" width="4.7" height="2.5" fill="#222529"/><rect x="42.2" y="-0.0" width="4.7" height="4.9" fill="#0b0b0d"/><rect x="62.1" y="-0.0" width="14.8" height="4.9" fill="#222529"/><rect x="87.5" y="-0.0" width="19.5" height="4.9" fill="#0b0b0d"/><rect x="122.3" y="-0.0" width="4.7" height="4.9" fill="#000"/><rect x="17.2" y="4.9" width="4.7" height="4.8" fill="#1b1d21"/><rect x="42.2" y="4.9" width="4.7" height="4.8" fill="#1b1d21"/><rect x="52.4" y="4.9" width="4.7" height="4.8" fill="#000"/><rect x="67.2" y="4.9" width="4.7" height="4.8" fill="#1b1d21"/><rect x="87.5" y="4.9" width="14.4" height="4.8" fill="#000"/><rect x="107.0" y="4.9" width="10.2" height="4.8" fill="#222529"/><rect x="127.4" y="4.9" width="5.1" height="4.8" fill="#000"/><rect x="-0.2" y="9.7" width="2.1" height="4.9" fill="#000"/><rect x="17.2" y="9.7" width="9.7" height="4.9" fill="#222529"/><rect x="32.4" y="9.7" width="4.7" height="4.9" fill="#000"/><rect x="46.8" y="9.7" width="5.1" height="4.9" fill="#1b1d21"/><rect x="62.1" y="9.7" width="9.7" height="4.9" fill="#000"/><rect x="76.9" y="9.7" width="5.1" height="4.9" fill="#000"/><rect x="102.4" y="9.7" width="4.7" height="4.9" fill="#000"/><rect x="112.9" y="9.7" width="9.3" height="4.9" fill="#000"/><rect x="127.4" y="9.7" width="5.1" height="4.9" fill="#000"/><rect x="1.9" y="14.6" width="5.1" height="4.0" fill="#222529"/><rect x="12.1" y="14.6" width="4.7" height="4.0" fill="#0b0b0d"/><rect x="26.9" y="14.6" width="5.1" height="4.0" fill="#0b0b0d"/><rect x="37.1" y="14.6" width="5.1" height="4.0" fill="#222529"/><rect x="52.4" y="14.6" width="4.7" height="4.0" fill="#000"/><rect x="62.1" y="14.6" width="9.7" height="4.0" fill="#000"/><rect x="87.5" y="17.6" width="4.7" height="1.0" fill="#000"/><rect x="107.0" y="14.6" width="5.1" height="4.0" fill="#000"/><rect x="117.2" y="14.6" width="5.1" height="4.0" fill="#000"/><rect x="127.4" y="14.6" width="8.7" height="4.0" fill="#222529"/><rect x="147.3" y="-0.0" width="4.7" height="4.9" fill="#0b0b0d"/><rect x="172.3" y="-0.0" width="4.7" height="4.9" fill="#000"/><rect x="192.2" y="-0.0" width="19.5" height="4.9" fill="#1b1d21"/><rect x="232.4" y="-0.0" width="4.7" height="4.9" fill="#000"/><rect x="247.7" y="-0.0" width="9.3" height="4.9" fill="#000"/><rect x="262.1" y="-0.0" width="5.1" height="4.9" fill="#000"/><rect x="137.1" y="4.9" width="14.8" height="4.8" fill="#222529"/><rect x="157.4" y="4.9" width="4.7" height="4.8" fill="#1b1d21"/><rect x="172.3" y="4.9" width="9.3" height="4.8" fill="#000"/><rect x="197.3" y="4.9" width="14.4" height="4.8" fill="#1b1d21"/><rect x="221.8" y="4.9" width="5.1" height="4.8" fill="#000"/><rect x="237.9" y="4.9" width="9.3" height="4.8" fill="#000"/><rect x="257.4" y="4.9" width="4.7" height="4.8" fill="#000"/><rect x="137.1" y="9.7" width="9.7" height="4.9" fill="#000"/><rect x="157.4" y="9.7" width="4.7" height="4.9" fill="#000"/><rect x="172.3" y="9.7" width="4.7" height="4.9" fill="#0b0b0d"/><rect x="187.1" y="9.7" width="5.1" height="4.9" fill="#000"/><rect x="207.4" y="9.7" width="19.5" height="4.9" fill="#000"/><rect x="237.9" y="9.7" width="4.2" height="4.9" fill="#000"/><rect x="257.4" y="9.7" width="4.7" height="4.9" fill="#000"/><rect x="132.0" y="17.6" width="4.7" height="1.0" fill="#000"/><rect x="157.4" y="14.6" width="4.7" height="4.0" fill="#000"/><rect x="167.2" y="14.6" width="9.7" height="4.0" fill="#1b1d21"/><rect x="187.1" y="14.6" width="9.7" height="4.0" fill="#000"/><rect x="207.4" y="14.6" width="4.2" height="4.0" fill="#0b0b0d"/><rect x="227.3" y="14.6" width="4.7" height="4.0" fill="#000"/><rect x="237.9" y="14.6" width="4.2" height="4.0" fill="#0b0b0d"/><rect x="252.3" y="14.6" width="4.7" height="4.0" fill="#0b0b0d"/><rect x="267.2" y="14.6" width="1.3" height="4.0" fill="#0b0b0d"/></svg>
<div class="abs" style="left:103px;top:704.5px;width:507px;height:45.5px;overflow:hidden"><svg class="pix" style="left:0;top:0" width="507" height="49" viewBox="0 0 507 49" shape-rendering="crispEdges"><rect width="100%" height="100%" fill="#fbfbfe"/><rect x="29.4" y="0.0" width="4.95" height="4.95" fill="#f4f0f6"/><rect x="39.2" y="0.0" width="4.95" height="4.95" fill="#f1f4fc"/><rect x="49.0" y="0.0" width="4.95" height="4.95" fill="#f4f0f6"/><rect x="63.7" y="0.0" width="4.95" height="4.95" fill="#f6eef3"/><rect x="68.6" y="0.0" width="4.95" height="4.95" fill="#f6eef3"/><rect x="78.4" y="0.0" width="4.95" height="4.95" fill="#f4f0f6"/><rect x="83.3" y="0.0" width="4.95" height="4.95" fill="#f1f4fc"/><rect x="88.2" y="0.0" width="4.95" height="4.95" fill="#f4f0f6"/><rect x="93.1" y="0.0" width="4.95" height="4.95" fill="#f1f4fc"/><rect x="102.9" y="0.0" width="4.95" height="4.95" fill="#f6eef3"/><rect x="112.7" y="0.0" width="4.95" height="4.95" fill="#f6eef3"/><rect x="117.6" y="0.0" width="4.95" height="4.95" fill="#f6eef3"/><rect x="132.3" y="0.0" width="4.95" height="4.95" fill="#f6eef3"/><rect x="147.0" y="0.0" width="4.95" height="4.95" fill="#eef1fa"/><rect x="161.7" y="0.0" width="4.95" height="4.95" fill="#eef1fa"/><rect x="176.4" y="0.0" width="4.95" height="4.95" fill="#eef1fa"/><rect x="181.3" y="0.0" width="4.95" height="4.95" fill="#eef1fa"/><rect x="210.7" y="0.0" width="4.95" height="4.95" fill="#f1f4fc"/><rect x="269.5" y="0.0" width="4.95" height="4.95" fill="#f6eef3"/><rect x="303.8" y="0.0" width="4.95" height="4.95" fill="#eef1fa"/><rect x="313.6" y="0.0" width="4.95" height="4.95" fill="#f1f4fc"/><rect x="318.5" y="0.0" width="4.95" height="4.95" fill="#eef1fa"/><rect x="352.8" y="0.0" width="4.95" height="4.95" fill="#f1f4fc"/><rect x="382.2" y="0.0" width="4.95" height="4.95" fill="#f4f0f6"/><rect x="387.1" y="0.0" width="4.95" height="4.95" fill="#eef1fa"/><rect x="406.7" y="0.0" width="4.95" height="4.95" fill="#f1f4fc"/><rect x="421.4" y="0.0" width="4.95" height="4.95" fill="#f6eef3"/><rect x="436.1" y="0.0" width="4.95" height="4.95" fill="#f4f0f6"/><rect x="445.9" y="0.0" width="4.95" height="4.95" fill="#f4f0f6"/><rect x="450.8" y="0.0" width="4.95" height="4.95" fill="#f4f0f6"/><rect x="465.5" y="0.0" width="4.95" height="4.95" fill="#f4f0f6"/><rect x="485.1" y="0.0" width="4.95" height="4.95" fill="#f4f0f6"/><rect x="494.9" y="0.0" width="4.95" height="4.95" fill="#f4f0f6"/><rect x="0.0" y="4.9" width="4.95" height="4.95" fill="#f4f0f6"/><rect x="9.8" y="4.9" width="4.95" height="4.95" fill="#f4f0f6"/><rect x="14.7" y="4.9" width="4.95" height="4.95" fill="#eef1fa"/><rect x="19.6" y="4.9" width="4.95" height="4.95" fill="#eef1fa"/><rect x="49.0" y="4.9" width="4.95" height="4.95" fill="#f4f0f6"/><rect x="53.9" y="4.9" width="4.95" height="4.95" fill="#eef1fa"/><rect x="68.6" y="4.9" width="4.95" height="4.95" fill="#f1f4fc"/><rect x="88.2" y="4.9" width="4.95" height="4.95" fill="#eef1fa"/><rect x="166.6" y="4.9" width="4.95" height="4.95" fill="#eef1fa"/><rect x="196.0" y="4.9" width="4.95" height="4.95" fill="#f4f0f6"/><rect x="215.6" y="4.9" width="4.95" height="4.95" fill="#f1f4fc"/><rect x="220.5" y="4.9" width="4.95" height="4.95" fill="#f4f0f6"/><rect x="230.3" y="4.9" width="4.95" height="4.95" fill="#f6eef3"/><rect x="240.1" y="4.9" width="4.95" height="4.95" fill="#f4f0f6"/><rect x="249.9" y="4.9" width="4.95" height="4.95" fill="#f6eef3"/><rect x="254.8" y="4.9" width="4.95" height="4.95" fill="#f6eef3"/><rect x="284.2" y="4.9" width="4.95" height="4.95" fill="#f6eef3"/><rect x="289.1" y="4.9" width="4.95" height="4.95" fill="#eef1fa"/><rect x="294.0" y="4.9" width="4.95" height="4.95" fill="#f4f0f6"/><rect x="338.1" y="4.9" width="4.95" height="4.95" fill="#eef1fa"/><rect x="347.9" y="4.9" width="4.95" height="4.95" fill="#eef1fa"/><rect x="377.3" y="4.9" width="4.95" height="4.95" fill="#f4f0f6"/><rect x="411.6" y="4.9" width="4.95" height="4.95" fill="#f1f4fc"/><rect x="480.2" y="4.9" width="4.95" height="4.95" fill="#eef1fa"/><rect x="494.9" y="4.9" width="4.95" height="4.95" fill="#f1f4fc"/><rect x="4.9" y="9.8" width="4.95" height="4.95" fill="#f4f0f6"/><rect x="9.8" y="9.8" width="4.95" height="4.95" fill="#f4f0f6"/><rect x="14.7" y="9.8" width="4.95" height="4.95" fill="#f1f4fc"/><rect x="29.4" y="9.8" width="4.95" height="4.95" fill="#eef1fa"/><rect x="34.3" y="9.8" width="4.95" height="4.95" fill="#f4f0f6"/><rect x="44.1" y="9.8" width="4.95" height="4.95" fill="#eef1fa"/><rect x="58.8" y="9.8" width="4.95" height="4.95" fill="#f4f0f6"/><rect x="88.2" y="9.8" width="4.95" height="4.95" fill="#f6eef3"/><rect x="107.8" y="9.8" width="4.95" height="4.95" fill="#f1f4fc"/><rect x="132.3" y="9.8" width="4.95" height="4.95" fill="#eef1fa"/><rect x="147.0" y="9.8" width="4.95" height="4.95" fill="#f6eef3"/><rect x="151.9" y="9.8" width="4.95" height="4.95" fill="#f4f0f6"/><rect x="220.5" y="9.8" width="4.95" height="4.95" fill="#f4f0f6"/><rect x="245.0" y="9.8" width="4.95" height="4.95" fill="#f4f0f6"/><rect x="269.5" y="9.8" width="4.95" height="4.95" fill="#f6eef3"/><rect x="274.4" y="9.8" width="4.95" height="4.95" fill="#f1f4fc"/><rect x="289.1" y="9.8" width="4.95" height="4.95" fill="#f4f0f6"/><rect x="308.7" y="9.8" width="4.95" height="4.95" fill="#f1f4fc"/><rect x="313.6" y="9.8" width="4.95" height="4.95" fill="#f1f4fc"/><rect x="323.4" y="9.8" width="4.95" height="4.95" fill="#eef1fa"/><rect x="338.1" y="9.8" width="4.95" height="4.95" fill="#f6eef3"/><rect x="347.9" y="9.8" width="4.95" height="4.95" fill="#f6eef3"/><rect x="352.8" y="9.8" width="4.95" height="4.95" fill="#f1f4fc"/><rect x="367.5" y="9.8" width="4.95" height="4.95" fill="#f1f4fc"/><rect x="382.2" y="9.8" width="4.95" height="4.95" fill="#f4f0f6"/><rect x="387.1" y="9.8" width="4.95" height="4.95" fill="#f4f0f6"/><rect x="406.7" y="9.8" width="4.95" height="4.95" fill="#eef1fa"/><rect x="411.6" y="9.8" width="4.95" height="4.95" fill="#eef1fa"/><rect x="431.2" y="9.8" width="4.95" height="4.95" fill="#f6eef3"/><rect x="436.1" y="9.8" width="4.95" height="4.95" fill="#eef1fa"/><rect x="445.9" y="9.8" width="4.95" height="4.95" fill="#f6eef3"/><rect x="465.5" y="9.8" width="4.95" height="4.95" fill="#f1f4fc"/><rect x="475.3" y="9.8" width="4.95" height="4.95" fill="#f1f4fc"/><rect x="480.2" y="9.8" width="4.95" height="4.95" fill="#f1f4fc"/><rect x="0.0" y="14.7" width="4.95" height="4.95" fill="#f1f4fc"/><rect x="39.2" y="14.7" width="4.95" height="4.95" fill="#f4f0f6"/><rect x="49.0" y="14.7" width="4.95" height="4.95" fill="#f4f0f6"/><rect x="58.8" y="14.7" width="4.95" height="4.95" fill="#eef1fa"/><rect x="93.1" y="14.7" width="4.95" height="4.95" fill="#f4f0f6"/><rect x="107.8" y="14.7" width="4.95" height="4.95" fill="#f6eef3"/><rect x="122.5" y="14.7" width="4.95" height="4.95" fill="#f1f4fc"/><rect x="127.4" y="14.7" width="4.95" height="4.95" fill="#f6eef3"/><rect x="132.3" y="14.7" width="4.95" height="4.95" fill="#f4f0f6"/><rect x="176.4" y="14.7" width="4.95" height="4.95" fill="#f6eef3"/><rect x="181.3" y="14.7" width="4.95" height="4.95" fill="#f4f0f6"/><rect x="200.9" y="14.7" width="4.95" height="4.95" fill="#f6eef3"/><rect x="215.6" y="14.7" width="4.95" height="4.95" fill="#f1f4fc"/><rect x="235.2" y="14.7" width="4.95" height="4.95" fill="#f1f4fc"/><rect x="254.8" y="14.7" width="4.95" height="4.95" fill="#eef1fa"/><rect x="259.7" y="14.7" width="4.95" height="4.95" fill="#f6eef3"/><rect x="269.5" y="14.7" width="4.95" height="4.95" fill="#f6eef3"/><rect x="308.7" y="14.7" width="4.95" height="4.95" fill="#eef1fa"/><rect x="313.6" y="14.7" width="4.95" height="4.95" fill="#f4f0f6"/><rect x="318.5" y="14.7" width="4.95" height="4.95" fill="#f6eef3"/><rect x="323.4" y="14.7" width="4.95" height="4.95" fill="#f6eef3"/><rect x="347.9" y="14.7" width="4.95" height="4.95" fill="#f1f4fc"/><rect x="362.6" y="14.7" width="4.95" height="4.95" fill="#f1f4fc"/><rect x="387.1" y="14.7" width="4.95" height="4.95" fill="#f1f4fc"/><rect x="392.0" y="14.7" width="4.95" height="4.95" fill="#f4f0f6"/><rect x="396.9" y="14.7" width="4.95" height="4.95" fill="#f4f0f6"/><rect x="401.8" y="14.7" width="4.95" height="4.95" fill="#f6eef3"/><rect x="421.4" y="14.7" width="4.95" height="4.95" fill="#f4f0f6"/><rect x="445.9" y="14.7" width="4.95" height="4.95" fill="#f4f0f6"/><rect x="450.8" y="14.7" width="4.95" height="4.95" fill="#f6eef3"/><rect x="455.7" y="14.7" width="4.95" height="4.95" fill="#eef1fa"/><rect x="465.5" y="14.7" width="4.95" height="4.95" fill="#f6eef3"/><rect x="480.2" y="14.7" width="4.95" height="4.95" fill="#f1f4fc"/><rect x="0.0" y="19.6" width="4.95" height="4.95" fill="#f1f4fc"/><rect x="24.5" y="19.6" width="4.95" height="4.95" fill="#f1f4fc"/><rect x="29.4" y="19.6" width="4.95" height="4.95" fill="#f4f0f6"/><rect x="34.3" y="19.6" width="4.95" height="4.95" fill="#eef1fa"/><rect x="49.0" y="19.6" width="4.95" height="4.95" fill="#f1f4fc"/><rect x="78.4" y="19.6" width="4.95" height="4.95" fill="#f4f0f6"/><rect x="88.2" y="19.6" width="4.95" height="4.95" fill="#f6eef3"/><rect x="107.8" y="19.6" width="4.95" height="4.95" fill="#eef1fa"/><rect x="122.5" y="19.6" width="4.95" height="4.95" fill="#eef1fa"/><rect x="171.5" y="19.6" width="4.95" height="4.95" fill="#f4f0f6"/><rect x="191.1" y="19.6" width="4.95" height="4.95" fill="#f4f0f6"/><rect x="200.9" y="19.6" width="4.95" height="4.95" fill="#f1f4fc"/><rect x="215.6" y="19.6" width="4.95" height="4.95" fill="#f1f4fc"/><rect x="220.5" y="19.6" width="4.95" height="4.95" fill="#f6eef3"/><rect x="235.2" y="19.6" width="4.95" height="4.95" fill="#f1f4fc"/><rect x="240.1" y="19.6" width="4.95" height="4.95" fill="#f4f0f6"/><rect x="245.0" y="19.6" width="4.95" height="4.95" fill="#f6eef3"/><rect x="254.8" y="19.6" width="4.95" height="4.95" fill="#f6eef3"/><rect x="264.6" y="19.6" width="4.95" height="4.95" fill="#f6eef3"/><rect x="274.4" y="19.6" width="4.95" height="4.95" fill="#f4f0f6"/><rect x="284.2" y="19.6" width="4.95" height="4.95" fill="#eef1fa"/><rect x="294.0" y="19.6" width="4.95" height="4.95" fill="#f4f0f6"/><rect x="298.9" y="19.6" width="4.95" height="4.95" fill="#f1f4fc"/><rect x="328.3" y="19.6" width="4.95" height="4.95" fill="#f4f0f6"/><rect x="338.1" y="19.6" width="4.95" height="4.95" fill="#f1f4fc"/><rect x="343.0" y="19.6" width="4.95" height="4.95" fill="#f6eef3"/><rect x="362.6" y="19.6" width="4.95" height="4.95" fill="#eef1fa"/><rect x="416.5" y="19.6" width="4.95" height="4.95" fill="#f4f0f6"/><rect x="426.3" y="19.6" width="4.95" height="4.95" fill="#f6eef3"/><rect x="436.1" y="19.6" width="4.95" height="4.95" fill="#f6eef3"/><rect x="450.8" y="19.6" width="4.95" height="4.95" fill="#f6eef3"/><rect x="480.2" y="19.6" width="4.95" height="4.95" fill="#f6eef3"/><rect x="490.0" y="19.6" width="4.95" height="4.95" fill="#f6eef3"/><rect x="499.8" y="19.6" width="4.95" height="4.95" fill="#f1f4fc"/><rect x="44.1" y="24.5" width="4.95" height="4.95" fill="#f6eef3"/><rect x="73.5" y="24.5" width="4.95" height="4.95" fill="#f1f4fc"/><rect x="78.4" y="24.5" width="4.95" height="4.95" fill="#eef1fa"/><rect x="107.8" y="24.5" width="4.95" height="4.95" fill="#f6eef3"/><rect x="112.7" y="24.5" width="4.95" height="4.95" fill="#f1f4fc"/><rect x="151.9" y="24.5" width="4.95" height="4.95" fill="#f1f4fc"/><rect x="161.7" y="24.5" width="4.95" height="4.95" fill="#f4f0f6"/><rect x="171.5" y="24.5" width="4.95" height="4.95" fill="#f4f0f6"/><rect x="191.1" y="24.5" width="4.95" height="4.95" fill="#eef1fa"/><rect x="200.9" y="24.5" width="4.95" height="4.95" fill="#eef1fa"/><rect x="205.8" y="24.5" width="4.95" height="4.95" fill="#f1f4fc"/><rect x="210.7" y="24.5" width="4.95" height="4.95" fill="#eef1fa"/><rect x="225.4" y="24.5" width="4.95" height="4.95" fill="#f6eef3"/><rect x="230.3" y="24.5" width="4.95" height="4.95" fill="#f4f0f6"/><rect x="240.1" y="24.5" width="4.95" height="4.95" fill="#f1f4fc"/><rect x="269.5" y="24.5" width="4.95" height="4.95" fill="#f4f0f6"/><rect x="289.1" y="24.5" width="4.95" height="4.95" fill="#eef1fa"/><rect x="294.0" y="24.5" width="4.95" height="4.95" fill="#f1f4fc"/><rect x="298.9" y="24.5" width="4.95" height="4.95" fill="#eef1fa"/><rect x="313.6" y="24.5" width="4.95" height="4.95" fill="#f6eef3"/><rect x="323.4" y="24.5" width="4.95" height="4.95" fill="#eef1fa"/><rect x="333.2" y="24.5" width="4.95" height="4.95" fill="#f4f0f6"/><rect x="338.1" y="24.5" width="4.95" height="4.95" fill="#f1f4fc"/><rect x="362.6" y="24.5" width="4.95" height="4.95" fill="#f4f0f6"/><rect x="372.4" y="24.5" width="4.95" height="4.95" fill="#f6eef3"/><rect x="377.3" y="24.5" width="4.95" height="4.95" fill="#eef1fa"/><rect x="382.2" y="24.5" width="4.95" height="4.95" fill="#f1f4fc"/><rect x="406.7" y="24.5" width="4.95" height="4.95" fill="#f1f4fc"/><rect x="421.4" y="24.5" width="4.95" height="4.95" fill="#eef1fa"/><rect x="445.9" y="24.5" width="4.95" height="4.95" fill="#f4f0f6"/><rect x="460.6" y="24.5" width="4.95" height="4.95" fill="#eef1fa"/><rect x="465.5" y="24.5" width="4.95" height="4.95" fill="#f1f4fc"/><rect x="485.1" y="24.5" width="4.95" height="4.95" fill="#eef1fa"/><rect x="490.0" y="24.5" width="4.95" height="4.95" fill="#f4f0f6"/><rect x="504.7" y="24.5" width="4.95" height="4.95" fill="#eef1fa"/><rect x="4.9" y="29.4" width="4.95" height="4.95" fill="#f4f0f6"/><rect x="19.6" y="29.4" width="4.95" height="4.95" fill="#f1f4fc"/><rect x="24.5" y="29.4" width="4.95" height="4.95" fill="#eef1fa"/><rect x="34.3" y="29.4" width="4.95" height="4.95" fill="#f4f0f6"/><rect x="39.2" y="29.4" width="4.95" height="4.95" fill="#f4f0f6"/><rect x="49.0" y="29.4" width="4.95" height="4.95" fill="#f1f4fc"/><rect x="53.9" y="29.4" width="4.95" height="4.95" fill="#f1f4fc"/><rect x="68.6" y="29.4" width="4.95" height="4.95" fill="#f4f0f6"/><rect x="78.4" y="29.4" width="4.95" height="4.95" fill="#f4f0f6"/><rect x="93.1" y="29.4" width="4.95" height="4.95" fill="#f6eef3"/><rect x="102.9" y="29.4" width="4.95" height="4.95" fill="#eef1fa"/><rect x="122.5" y="29.4" width="4.95" height="4.95" fill="#f6eef3"/><rect x="127.4" y="29.4" width="4.95" height="4.95" fill="#f4f0f6"/><rect x="132.3" y="29.4" width="4.95" height="4.95" fill="#f1f4fc"/><rect x="156.8" y="29.4" width="4.95" height="4.95" fill="#f6eef3"/><rect x="196.0" y="29.4" width="4.95" height="4.95" fill="#f1f4fc"/><rect x="230.3" y="29.4" width="4.95" height="4.95" fill="#f6eef3"/><rect x="240.1" y="29.4" width="4.95" height="4.95" fill="#f6eef3"/><rect x="259.7" y="29.4" width="4.95" height="4.95" fill="#f4f0f6"/><rect x="264.6" y="29.4" width="4.95" height="4.95" fill="#f6eef3"/><rect x="274.4" y="29.4" width="4.95" height="4.95" fill="#f1f4fc"/><rect x="289.1" y="29.4" width="4.95" height="4.95" fill="#f4f0f6"/><rect x="294.0" y="29.4" width="4.95" height="4.95" fill="#f4f0f6"/><rect x="303.8" y="29.4" width="4.95" height="4.95" fill="#f1f4fc"/><rect x="333.2" y="29.4" width="4.95" height="4.95" fill="#eef1fa"/><rect x="343.0" y="29.4" width="4.95" height="4.95" fill="#f6eef3"/><rect x="352.8" y="29.4" width="4.95" height="4.95" fill="#f6eef3"/><rect x="372.4" y="29.4" width="4.95" height="4.95" fill="#f1f4fc"/><rect x="377.3" y="29.4" width="4.95" height="4.95" fill="#f1f4fc"/><rect x="411.6" y="29.4" width="4.95" height="4.95" fill="#f6eef3"/><rect x="416.5" y="29.4" width="4.95" height="4.95" fill="#f1f4fc"/><rect x="426.3" y="29.4" width="4.95" height="4.95" fill="#f4f0f6"/><rect x="436.1" y="29.4" width="4.95" height="4.95" fill="#f1f4fc"/><rect x="465.5" y="29.4" width="4.95" height="4.95" fill="#f6eef3"/><rect x="470.4" y="29.4" width="4.95" height="4.95" fill="#f4f0f6"/><rect x="494.9" y="29.4" width="4.95" height="4.95" fill="#f1f4fc"/><rect x="29.4" y="34.3" width="4.95" height="4.95" fill="#f1f4fc"/><rect x="39.2" y="34.3" width="4.95" height="4.95" fill="#f6eef3"/><rect x="58.8" y="34.3" width="4.95" height="4.95" fill="#eef1fa"/><rect x="68.6" y="34.3" width="4.95" height="4.95" fill="#eef1fa"/><rect x="73.5" y="34.3" width="4.95" height="4.95" fill="#f1f4fc"/><rect x="83.3" y="34.3" width="4.95" height="4.95" fill="#f4f0f6"/><rect x="88.2" y="34.3" width="4.95" height="4.95" fill="#f1f4fc"/><rect x="93.1" y="34.3" width="4.95" height="4.95" fill="#f6eef3"/><rect x="117.6" y="34.3" width="4.95" height="4.95" fill="#f1f4fc"/><rect x="122.5" y="34.3" width="4.95" height="4.95" fill="#f1f4fc"/><rect x="142.1" y="34.3" width="4.95" height="4.95" fill="#eef1fa"/><rect x="186.2" y="34.3" width="4.95" height="4.95" fill="#f4f0f6"/><rect x="191.1" y="34.3" width="4.95" height="4.95" fill="#f4f0f6"/><rect x="205.8" y="34.3" width="4.95" height="4.95" fill="#f4f0f6"/><rect x="210.7" y="34.3" width="4.95" height="4.95" fill="#f4f0f6"/><rect x="220.5" y="34.3" width="4.95" height="4.95" fill="#f1f4fc"/><rect x="240.1" y="34.3" width="4.95" height="4.95" fill="#f4f0f6"/><rect x="274.4" y="34.3" width="4.95" height="4.95" fill="#f4f0f6"/><rect x="284.2" y="34.3" width="4.95" height="4.95" fill="#eef1fa"/><rect x="289.1" y="34.3" width="4.95" height="4.95" fill="#eef1fa"/><rect x="308.7" y="34.3" width="4.95" height="4.95" fill="#f6eef3"/><rect x="333.2" y="34.3" width="4.95" height="4.95" fill="#f1f4fc"/><rect x="357.7" y="34.3" width="4.95" height="4.95" fill="#f4f0f6"/><rect x="362.6" y="34.3" width="4.95" height="4.95" fill="#f4f0f6"/><rect x="377.3" y="34.3" width="4.95" height="4.95" fill="#f4f0f6"/><rect x="382.2" y="34.3" width="4.95" height="4.95" fill="#f4f0f6"/><rect x="396.9" y="34.3" width="4.95" height="4.95" fill="#f6eef3"/><rect x="421.4" y="34.3" width="4.95" height="4.95" fill="#f1f4fc"/><rect x="426.3" y="34.3" width="4.95" height="4.95" fill="#f4f0f6"/><rect x="441.0" y="34.3" width="4.95" height="4.95" fill="#f1f4fc"/><rect x="450.8" y="34.3" width="4.95" height="4.95" fill="#f1f4fc"/><rect x="460.6" y="34.3" width="4.95" height="4.95" fill="#eef1fa"/><rect x="475.3" y="34.3" width="4.95" height="4.95" fill="#f4f0f6"/><rect x="480.2" y="34.3" width="4.95" height="4.95" fill="#eef1fa"/><rect x="490.0" y="34.3" width="4.95" height="4.95" fill="#f4f0f6"/><rect x="0.0" y="39.2" width="4.95" height="4.95" fill="#eef1fa"/><rect x="14.7" y="39.2" width="4.95" height="4.95" fill="#eef1fa"/><rect x="19.6" y="39.2" width="4.95" height="4.95" fill="#f1f4fc"/><rect x="44.1" y="39.2" width="4.95" height="4.95" fill="#f4f0f6"/><rect x="49.0" y="39.2" width="4.95" height="4.95" fill="#f4f0f6"/><rect x="53.9" y="39.2" width="4.95" height="4.95" fill="#eef1fa"/><rect x="78.4" y="39.2" width="4.95" height="4.95" fill="#f4f0f6"/><rect x="83.3" y="39.2" width="4.95" height="4.95" fill="#f6eef3"/><rect x="88.2" y="39.2" width="4.95" height="4.95" fill="#f1f4fc"/><rect x="93.1" y="39.2" width="4.95" height="4.95" fill="#f4f0f6"/><rect x="102.9" y="39.2" width="4.95" height="4.95" fill="#f4f0f6"/><rect x="117.6" y="39.2" width="4.95" height="4.95" fill="#f6eef3"/><rect x="151.9" y="39.2" width="4.95" height="4.95" fill="#f1f4fc"/><rect x="186.2" y="39.2" width="4.95" height="4.95" fill="#f6eef3"/><rect x="196.0" y="39.2" width="4.95" height="4.95" fill="#f4f0f6"/><rect x="210.7" y="39.2" width="4.95" height="4.95" fill="#f6eef3"/><rect x="235.2" y="39.2" width="4.95" height="4.95" fill="#f6eef3"/><rect x="240.1" y="39.2" width="4.95" height="4.95" fill="#f1f4fc"/><rect x="249.9" y="39.2" width="4.95" height="4.95" fill="#f4f0f6"/><rect x="259.7" y="39.2" width="4.95" height="4.95" fill="#f4f0f6"/><rect x="264.6" y="39.2" width="4.95" height="4.95" fill="#eef1fa"/><rect x="289.1" y="39.2" width="4.95" height="4.95" fill="#f1f4fc"/><rect x="323.4" y="39.2" width="4.95" height="4.95" fill="#eef1fa"/><rect x="328.3" y="39.2" width="4.95" height="4.95" fill="#eef1fa"/><rect x="333.2" y="39.2" width="4.95" height="4.95" fill="#f4f0f6"/><rect x="338.1" y="39.2" width="4.95" height="4.95" fill="#eef1fa"/><rect x="347.9" y="39.2" width="4.95" height="4.95" fill="#f6eef3"/><rect x="362.6" y="39.2" width="4.95" height="4.95" fill="#f6eef3"/><rect x="426.3" y="39.2" width="4.95" height="4.95" fill="#f4f0f6"/><rect x="455.7" y="39.2" width="4.95" height="4.95" fill="#f1f4fc"/><rect x="465.5" y="39.2" width="4.95" height="4.95" fill="#f6eef3"/><rect x="470.4" y="39.2" width="4.95" height="4.95" fill="#f6eef3"/><rect x="480.2" y="39.2" width="4.95" height="4.95" fill="#f4f0f6"/><rect x="499.8" y="39.2" width="4.95" height="4.95" fill="#eef1fa"/><rect x="0.0" y="44.1" width="4.95" height="4.95" fill="#f6eef3"/><rect x="58.8" y="44.1" width="4.95" height="4.95" fill="#eef1fa"/><rect x="68.6" y="44.1" width="4.95" height="4.95" fill="#f4f0f6"/><rect x="73.5" y="44.1" width="4.95" height="4.95" fill="#f1f4fc"/><rect x="78.4" y="44.1" width="4.95" height="4.95" fill="#f6eef3"/><rect x="83.3" y="44.1" width="4.95" height="4.95" fill="#f4f0f6"/><rect x="102.9" y="44.1" width="4.95" height="4.95" fill="#f1f4fc"/><rect x="107.8" y="44.1" width="4.95" height="4.95" fill="#f4f0f6"/><rect x="137.2" y="44.1" width="4.95" height="4.95" fill="#f4f0f6"/><rect x="147.0" y="44.1" width="4.95" height="4.95" fill="#f1f4fc"/><rect x="156.8" y="44.1" width="4.95" height="4.95" fill="#eef1fa"/><rect x="166.6" y="44.1" width="4.95" height="4.95" fill="#f4f0f6"/><rect x="171.5" y="44.1" width="4.95" height="4.95" fill="#f4f0f6"/><rect x="176.4" y="44.1" width="4.95" height="4.95" fill="#f6eef3"/><rect x="191.1" y="44.1" width="4.95" height="4.95" fill="#f1f4fc"/><rect x="205.8" y="44.1" width="4.95" height="4.95" fill="#f4f0f6"/><rect x="215.6" y="44.1" width="4.95" height="4.95" fill="#f1f4fc"/><rect x="220.5" y="44.1" width="4.95" height="4.95" fill="#f6eef3"/><rect x="289.1" y="44.1" width="4.95" height="4.95" fill="#eef1fa"/><rect x="308.7" y="44.1" width="4.95" height="4.95" fill="#f6eef3"/><rect x="318.5" y="44.1" width="4.95" height="4.95" fill="#f4f0f6"/><rect x="328.3" y="44.1" width="4.95" height="4.95" fill="#eef1fa"/><rect x="333.2" y="44.1" width="4.95" height="4.95" fill="#f6eef3"/><rect x="411.6" y="44.1" width="4.95" height="4.95" fill="#f4f0f6"/><rect x="450.8" y="44.1" width="4.95" height="4.95" fill="#f4f0f6"/><rect x="455.7" y="44.1" width="4.95" height="4.95" fill="#f1f4fc"/><rect x="470.4" y="44.1" width="4.95" height="4.95" fill="#eef1fa"/><rect x="475.3" y="44.1" width="4.95" height="4.95" fill="#eef1fa"/><rect x="0.0" y="0.0" width="6.79" height="4.95" fill="#000"/><rect x="12.4" y="0.0" width="4.68" height="4.95" fill="#000"/><rect x="37.6" y="0.0" width="4.68" height="4.95" fill="#000"/><rect x="57.6" y="0.0" width="4.68" height="4.95" fill="#000"/><rect x="67.4" y="0.0" width="4.68" height="4.95" fill="#000"/><rect x="77.7" y="0.0" width="4.16" height="4.95" fill="#222529"/><rect x="102.4" y="0.0" width="4.68" height="4.95" fill="#000"/><rect x="167.2" y="0.0" width="0.87" height="4.95" fill="#222529"/><rect x="2.1" y="4.9" width="4.68" height="4.95" fill="#050506"/><rect x="32.5" y="4.9" width="4.68" height="4.95" fill="#222529"/><rect x="52.5" y="4.9" width="4.68" height="4.95" fill="#1b1d21"/><rect x="72.0" y="4.9" width="5.19" height="4.95" fill="#050506"/><rect x="107.5" y="4.9" width="4.68" height="4.95" fill="#222529"/><rect x="127.6" y="4.9" width="4.68" height="4.95" fill="#1b1d21"/><rect x="132.2" y="4.9" width="4.68" height="4.95" fill="#000"/><rect x="157.4" y="4.9" width="4.68" height="4.95" fill="#222529"/><rect x="0.0" y="9.8" width="6.79" height="4.95" fill="#000"/><rect x="12.4" y="9.8" width="4.68" height="4.95" fill="#000"/><rect x="17.0" y="9.8" width="4.68" height="4.95" fill="#000"/><rect x="42.2" y="9.8" width="4.68" height="4.95" fill="#050506"/><rect x="67.4" y="9.8" width="4.93" height="4.95" fill="#1b1d21"/><rect x="72.3" y="9.8" width="4.93" height="4.95" fill="#000"/><rect x="92.6" y="9.8" width="4.68" height="4.95" fill="#000"/><rect x="97.2" y="9.8" width="4.68" height="4.95" fill="#1b1d21"/><rect x="107.5" y="9.8" width="4.85" height="4.95" fill="#000"/><rect x="112.3" y="9.8" width="4.85" height="4.95" fill="#222529"/><rect x="117.1" y="9.8" width="4.85" height="4.95" fill="#1b1d21"/><rect x="132.2" y="9.8" width="4.68" height="4.95" fill="#222529"/><rect x="12.4" y="14.7" width="4.85" height="4.95" fill="#000"/><rect x="17.2" y="14.7" width="4.85" height="4.95" fill="#050506"/><rect x="22.0" y="14.7" width="4.85" height="4.95" fill="#1b1d21"/><rect x="52.5" y="14.7" width="4.93" height="4.95" fill="#222529"/><rect x="57.4" y="14.7" width="4.93" height="4.95" fill="#000"/><rect x="62.3" y="14.7" width="4.93" height="4.95" fill="#1b1d21"/><rect x="67.2" y="14.7" width="4.93" height="4.95" fill="#050506"/><rect x="72.0" y="14.7" width="4.93" height="4.95" fill="#1b1d21"/><rect x="76.9" y="14.7" width="4.93" height="4.95" fill="#000"/><rect x="92.6" y="14.7" width="4.68" height="4.95" fill="#222529"/><rect x="102.4" y="14.7" width="4.68" height="4.95" fill="#1b1d21"/><rect x="127.6" y="14.7" width="4.68" height="4.95" fill="#000"/><rect x="147.6" y="14.7" width="4.68" height="4.95" fill="#222529"/><rect x="162.5" y="14.7" width="4.68" height="4.95" fill="#1b1d21"/><rect x="0.0" y="19.6" width="1.65" height="4.95" fill="#000"/><rect x="12.4" y="19.6" width="4.68" height="4.95" fill="#222529"/><rect x="17.0" y="19.6" width="4.68" height="4.95" fill="#000"/><rect x="27.3" y="19.6" width="4.68" height="4.95" fill="#000"/><rect x="37.6" y="19.6" width="4.68" height="4.95" fill="#050506"/><rect x="62.3" y="19.6" width="4.93" height="4.95" fill="#1b1d21"/><rect x="67.2" y="19.6" width="4.93" height="4.95" fill="#1b1d21"/><rect x="82.8" y="19.6" width="4.16" height="4.95" fill="#1b1d21"/><rect x="97.8" y="19.6" width="4.16" height="4.95" fill="#222529"/><rect x="107.5" y="19.6" width="4.68" height="4.95" fill="#000"/><rect x="122.4" y="19.6" width="4.68" height="4.95" fill="#000"/><rect x="147.6" y="19.6" width="4.85" height="4.95" fill="#1b1d21"/><rect x="152.4" y="19.6" width="4.85" height="4.95" fill="#000"/><rect x="157.2" y="19.6" width="4.85" height="4.95" fill="#000"/><rect x="0.0" y="24.5" width="1.65" height="4.95" fill="#000"/><rect x="17.0" y="24.5" width="4.68" height="4.95" fill="#000"/><rect x="27.3" y="24.5" width="4.93" height="4.95" fill="#000"/><rect x="32.2" y="24.5" width="4.93" height="4.95" fill="#222529"/><rect x="37.1" y="24.5" width="4.93" height="4.95" fill="#222529"/><rect x="42.0" y="24.5" width="4.93" height="4.95" fill="#050506"/><rect x="62.3" y="24.5" width="4.68" height="4.95" fill="#000"/><rect x="72.6" y="24.5" width="4.68" height="4.95" fill="#222529"/><rect x="82.8" y="24.5" width="4.42" height="4.95" fill="#222529"/><rect x="87.2" y="24.5" width="4.42" height="4.95" fill="#000"/><rect x="97.8" y="24.5" width="4.16" height="4.95" fill="#050506"/><rect x="112.7" y="24.5" width="4.68" height="4.95" fill="#000"/><rect x="122.4" y="24.5" width="4.68" height="4.95" fill="#222529"/><rect x="142.5" y="24.5" width="4.68" height="4.95" fill="#1b1d21"/><rect x="152.3" y="24.5" width="4.68" height="4.95" fill="#000"/><rect x="12.4" y="29.4" width="4.68" height="4.95" fill="#1b1d21"/><rect x="42.2" y="29.4" width="5.06" height="4.95" fill="#1b1d21"/><rect x="47.2" y="29.4" width="5.06" height="4.95" fill="#222529"/><rect x="52.2" y="29.4" width="5.06" height="4.95" fill="#000"/><rect x="57.3" y="29.4" width="5.06" height="4.95" fill="#000"/><rect x="92.6" y="29.4" width="4.68" height="4.95" fill="#000"/><rect x="97.2" y="29.4" width="4.68" height="4.95" fill="#050506"/><rect x="122.4" y="29.4" width="4.68" height="4.95" fill="#000"/><rect x="157.4" y="29.4" width="4.68" height="4.95" fill="#222529"/><rect x="0.0" y="34.3" width="6.79" height="4.95" fill="#050506"/><rect x="32.5" y="34.3" width="4.68" height="4.95" fill="#1b1d21"/><rect x="92.6" y="34.3" width="4.85" height="4.95" fill="#000"/><rect x="97.4" y="34.3" width="4.85" height="4.95" fill="#000"/><rect x="102.2" y="34.3" width="4.85" height="4.95" fill="#000"/><rect x="112.7" y="34.3" width="4.68" height="4.95" fill="#000"/><rect x="122.4" y="34.3" width="4.68" height="4.95" fill="#000"/><rect x="157.4" y="34.3" width="4.68" height="4.95" fill="#000"/><rect x="37.6" y="39.2" width="4.68" height="4.95" fill="#000"/><rect x="47.4" y="39.2" width="4.68" height="4.95" fill="#1b1d21"/><rect x="57.6" y="39.2" width="4.68" height="4.95" fill="#1b1d21"/><rect x="72.6" y="39.2" width="4.81" height="4.95" fill="#1b1d21"/><rect x="77.3" y="39.2" width="4.81" height="4.95" fill="#222529"/><rect x="82.1" y="39.2" width="4.81" height="4.95" fill="#050506"/><rect x="86.8" y="39.2" width="4.81" height="4.95" fill="#000"/><rect x="102.4" y="39.2" width="5.02" height="4.95" fill="#222529"/><rect x="107.4" y="39.2" width="5.02" height="4.95" fill="#222529"/><rect x="112.3" y="39.2" width="5.02" height="4.95" fill="#1b1d21"/><rect x="127.6" y="39.2" width="4.68" height="4.95" fill="#050506"/><rect x="132.2" y="39.2" width="4.68" height="4.95" fill="#1b1d21"/><rect x="147.6" y="39.2" width="4.68" height="4.95" fill="#000"/><rect x="17.5" y="44.1" width="4.16" height="4.95" fill="#000"/><rect x="42.2" y="44.1" width="4.68" height="4.95" fill="#000"/><rect x="77.2" y="44.1" width="4.51" height="4.95" fill="#222529"/><rect x="81.6" y="44.1" width="4.51" height="4.95" fill="#222529"/><rect x="86.1" y="44.1" width="4.51" height="4.95" fill="#000"/><rect x="128.6" y="44.1" width="7.25" height="4.95" fill="#222529"/><rect x="168.0" y="0.0" width="4.42" height="4.95" fill="#000"/><rect x="172.4" y="0.0" width="4.42" height="4.95" fill="#050506"/><rect x="207.6" y="0.0" width="4.68" height="4.95" fill="#1b1d21"/><rect x="212.2" y="0.0" width="4.68" height="4.95" fill="#222529"/><rect x="237.4" y="0.0" width="4.85" height="4.95" fill="#1b1d21"/><rect x="242.2" y="0.0" width="4.85" height="4.95" fill="#000"/><rect x="247.0" y="0.0" width="4.85" height="4.95" fill="#000"/><rect x="282.7" y="0.0" width="4.88" height="4.95" fill="#000"/><rect x="287.5" y="0.0" width="4.88" height="4.95" fill="#222529"/><rect x="292.3" y="0.0" width="4.88" height="4.95" fill="#1b1d21"/><rect x="297.2" y="0.0" width="4.88" height="4.95" fill="#1b1d21"/><rect x="302.0" y="0.0" width="4.88" height="4.95" fill="#1b1d21"/><rect x="337.2" y="0.0" width="0.87" height="4.95" fill="#000"/><rect x="182.4" y="4.9" width="4.68" height="4.95" fill="#222529"/><rect x="207.6" y="4.9" width="4.68" height="4.95" fill="#222529"/><rect x="222.5" y="4.9" width="4.68" height="4.95" fill="#222529"/><rect x="227.1" y="4.9" width="4.68" height="4.95" fill="#1b1d21"/><rect x="237.4" y="4.9" width="4.93" height="4.95" fill="#050506"/><rect x="242.3" y="4.9" width="4.93" height="4.95" fill="#050506"/><rect x="252.3" y="4.9" width="4.68" height="4.95" fill="#000"/><rect x="262.6" y="4.9" width="4.85" height="4.95" fill="#222529"/><rect x="267.4" y="4.9" width="4.85" height="4.95" fill="#1b1d21"/><rect x="272.2" y="4.9" width="4.85" height="4.95" fill="#1b1d21"/><rect x="292.4" y="4.9" width="4.93" height="4.95" fill="#050506"/><rect x="297.3" y="4.9" width="4.93" height="4.95" fill="#050506"/><rect x="302.2" y="4.9" width="4.93" height="4.95" fill="#222529"/><rect x="307.1" y="4.9" width="4.93" height="4.95" fill="#000"/><rect x="317.6" y="4.9" width="4.68" height="4.95" fill="#222529"/><rect x="322.3" y="4.9" width="4.68" height="4.95" fill="#1b1d21"/><rect x="332.5" y="4.9" width="4.68" height="4.95" fill="#1b1d21"/><rect x="172.1" y="9.8" width="4.68" height="4.95" fill="#050506"/><rect x="202.5" y="9.8" width="4.68" height="4.95" fill="#000"/><rect x="227.1" y="9.8" width="4.68" height="4.95" fill="#050506"/><rect x="237.4" y="9.8" width="4.88" height="4.95" fill="#222529"/><rect x="242.2" y="9.8" width="4.88" height="4.95" fill="#000"/><rect x="247.1" y="9.8" width="4.88" height="4.95" fill="#000"/><rect x="251.9" y="9.8" width="4.88" height="4.95" fill="#222529"/><rect x="256.7" y="9.8" width="4.88" height="4.95" fill="#000"/><rect x="287.3" y="9.8" width="4.93" height="4.95" fill="#1b1d21"/><rect x="292.2" y="9.8" width="4.93" height="4.95" fill="#222529"/><rect x="312.5" y="9.8" width="4.68" height="4.95" fill="#000"/><rect x="187.5" y="14.7" width="4.85" height="4.95" fill="#050506"/><rect x="192.3" y="14.7" width="4.85" height="4.95" fill="#050506"/><rect x="197.1" y="14.7" width="4.85" height="4.95" fill="#222529"/><rect x="242.6" y="14.7" width="4.68" height="4.95" fill="#050506"/><rect x="267.8" y="14.7" width="4.16" height="4.95" fill="#222529"/><rect x="277.5" y="14.7" width="4.68" height="4.95" fill="#000"/><rect x="287.3" y="14.7" width="5.19" height="4.95" fill="#000"/><rect x="317.6" y="14.7" width="4.68" height="4.95" fill="#000"/><rect x="322.3" y="14.7" width="4.68" height="4.95" fill="#000"/><rect x="168.0" y="19.6" width="4.16" height="4.95" fill="#000"/><rect x="197.3" y="19.6" width="4.68" height="4.95" fill="#1b1d21"/><rect x="207.6" y="19.6" width="4.68" height="4.95" fill="#000"/><rect x="222.5" y="19.6" width="4.68" height="4.95" fill="#1b1d21"/><rect x="227.1" y="19.6" width="4.68" height="4.95" fill="#1b1d21"/><rect x="242.6" y="19.6" width="4.68" height="4.95" fill="#000"/><rect x="252.3" y="19.6" width="4.68" height="4.95" fill="#1b1d21"/><rect x="262.6" y="19.6" width="4.16" height="4.95" fill="#050506"/><rect x="272.4" y="19.6" width="4.68" height="4.95" fill="#000"/><rect x="292.4" y="19.6" width="4.68" height="4.95" fill="#000"/><rect x="297.1" y="19.6" width="4.68" height="4.95" fill="#050506"/><rect x="322.3" y="19.6" width="4.68" height="4.95" fill="#222529"/><rect x="172.1" y="24.5" width="4.68" height="4.95" fill="#000"/><rect x="202.5" y="24.5" width="4.68" height="4.95" fill="#1b1d21"/><rect x="212.2" y="24.5" width="4.93" height="4.95" fill="#222529"/><rect x="217.1" y="24.5" width="4.93" height="4.95" fill="#000"/><rect x="232.3" y="24.5" width="4.93" height="4.95" fill="#050506"/><rect x="237.2" y="24.5" width="4.93" height="4.95" fill="#000"/><rect x="247.7" y="24.5" width="4.16" height="4.95" fill="#050506"/><rect x="257.5" y="24.5" width="4.68" height="4.95" fill="#1b1d21"/><rect x="262.1" y="24.5" width="4.68" height="4.95" fill="#1b1d21"/><rect x="297.6" y="24.5" width="4.68" height="4.95" fill="#050506"/><rect x="302.2" y="24.5" width="4.68" height="4.95" fill="#1b1d21"/><rect x="312.5" y="24.5" width="4.68" height="4.95" fill="#222529"/><rect x="322.3" y="24.5" width="4.93" height="4.95" fill="#000"/><rect x="327.1" y="24.5" width="4.93" height="4.95" fill="#000"/><rect x="172.1" y="29.4" width="5.02" height="4.95" fill="#000"/><rect x="177.1" y="29.4" width="5.02" height="4.95" fill="#050506"/><rect x="182.1" y="29.4" width="5.02" height="4.95" fill="#000"/><rect x="197.3" y="29.4" width="4.85" height="4.95" fill="#1b1d21"/><rect x="202.1" y="29.4" width="4.85" height="4.95" fill="#000"/><rect x="206.9" y="29.4" width="4.85" height="4.95" fill="#050506"/><rect x="227.6" y="29.4" width="4.68" height="4.95" fill="#000"/><rect x="232.3" y="29.4" width="4.68" height="4.95" fill="#000"/><rect x="262.6" y="29.4" width="4.97" height="4.95" fill="#000"/><rect x="267.5" y="29.4" width="4.97" height="4.95" fill="#1b1d21"/><rect x="272.5" y="29.4" width="4.97" height="4.95" fill="#1b1d21"/><rect x="277.4" y="29.4" width="4.97" height="4.95" fill="#1b1d21"/><rect x="282.3" y="29.4" width="4.97" height="4.95" fill="#222529"/><rect x="287.2" y="29.4" width="4.97" height="4.95" fill="#050506"/><rect x="292.1" y="29.4" width="4.97" height="4.95" fill="#1b1d21"/><rect x="307.9" y="29.4" width="4.16" height="4.95" fill="#1b1d21"/><rect x="322.3" y="29.4" width="4.68" height="4.95" fill="#000"/><rect x="187.5" y="34.3" width="4.68" height="4.95" fill="#222529"/><rect x="242.6" y="34.3" width="4.85" height="4.95" fill="#050506"/><rect x="247.4" y="34.3" width="4.85" height="4.95" fill="#050506"/><rect x="252.2" y="34.3" width="4.85" height="4.95" fill="#222529"/><rect x="262.6" y="34.3" width="4.16" height="4.95" fill="#000"/><rect x="277.5" y="34.3" width="4.68" height="4.95" fill="#1b1d21"/><rect x="287.3" y="34.3" width="5.19" height="4.95" fill="#222529"/><rect x="302.7" y="34.3" width="4.16" height="4.95" fill="#050506"/><rect x="317.6" y="34.3" width="4.68" height="4.95" fill="#000"/><rect x="177.3" y="39.2" width="4.68" height="4.95" fill="#000"/><rect x="192.7" y="39.2" width="4.16" height="4.95" fill="#050506"/><rect x="202.5" y="39.2" width="4.68" height="4.95" fill="#222529"/><rect x="212.2" y="39.2" width="4.85" height="4.95" fill="#000"/><rect x="217.0" y="39.2" width="4.85" height="4.95" fill="#000"/><rect x="221.8" y="39.2" width="4.85" height="4.95" fill="#1b1d21"/><rect x="232.3" y="39.2" width="4.68" height="4.95" fill="#222529"/><rect x="252.3" y="39.2" width="4.68" height="4.95" fill="#000"/><rect x="267.8" y="39.2" width="4.16" height="4.95" fill="#1b1d21"/><rect x="277.5" y="39.2" width="4.68" height="4.95" fill="#000"/><rect x="287.3" y="39.2" width="4.85" height="4.95" fill="#222529"/><rect x="292.1" y="39.2" width="4.85" height="4.95" fill="#050506"/><rect x="296.9" y="39.2" width="4.85" height="4.95" fill="#000"/><rect x="302.7" y="39.2" width="4.85" height="4.95" fill="#000"/><rect x="307.5" y="39.2" width="4.85" height="4.95" fill="#050506"/><rect x="312.3" y="39.2" width="4.85" height="4.95" fill="#1b1d21"/><rect x="317.6" y="39.2" width="4.68" height="4.95" fill="#1b1d21"/><rect x="332.5" y="39.2" width="5.50" height="4.95" fill="#050506"/><rect x="177.3" y="44.1" width="4.68" height="4.95" fill="#000"/><rect x="212.2" y="44.1" width="4.85" height="4.95" fill="#222529"/><rect x="217.0" y="44.1" width="4.85" height="4.95" fill="#000"/><rect x="221.8" y="44.1" width="4.85" height="4.95" fill="#000"/><rect x="252.3" y="44.1" width="4.68" height="4.95" fill="#000"/><rect x="277.5" y="44.1" width="4.68" height="4.95" fill="#1b1d21"/><rect x="287.3" y="44.1" width="5.05" height="4.95" fill="#000"/><rect x="292.3" y="44.1" width="5.05" height="4.95" fill="#222529"/><rect x="297.3" y="44.1" width="5.05" height="4.95" fill="#1b1d21"/><rect x="302.3" y="44.1" width="5.05" height="4.95" fill="#1b1d21"/><rect x="307.3" y="44.1" width="5.05" height="4.95" fill="#1b1d21"/><rect x="312.3" y="44.1" width="5.05" height="4.95" fill="#050506"/><rect x="317.3" y="44.1" width="5.05" height="4.95" fill="#000"/><rect x="332.5" y="44.1" width="5.50" height="4.95" fill="#1b1d21"/><rect x="338.0" y="0.0" width="4.81" height="4.95" fill="#222529"/><rect x="342.8" y="0.0" width="4.81" height="4.95" fill="#050506"/><rect x="347.5" y="0.0" width="4.81" height="4.95" fill="#000"/><rect x="352.3" y="0.0" width="4.81" height="4.95" fill="#000"/><rect x="362.7" y="0.0" width="4.16" height="4.95" fill="#000"/><rect x="397.6" y="0.0" width="4.16" height="4.95" fill="#050506"/><rect x="407.4" y="0.0" width="4.81" height="4.95" fill="#050506"/><rect x="412.2" y="0.0" width="4.81" height="4.95" fill="#000"/><rect x="416.9" y="0.0" width="4.81" height="4.95" fill="#000"/><rect x="421.7" y="0.0" width="4.81" height="4.95" fill="#1b1d21"/><rect x="447.5" y="0.0" width="4.68" height="4.95" fill="#000"/><rect x="462.4" y="0.0" width="4.16" height="4.95" fill="#050506"/><rect x="477.9" y="0.0" width="4.16" height="4.95" fill="#050506"/><rect x="492.3" y="0.0" width="4.68" height="4.95" fill="#050506"/><rect x="502.5" y="0.0" width="4.16" height="4.95" fill="#222529"/><rect x="342.1" y="4.9" width="4.68" height="4.95" fill="#000"/><rect x="392.5" y="4.9" width="4.68" height="4.95" fill="#050506"/><rect x="397.1" y="4.9" width="4.68" height="4.95" fill="#1b1d21"/><rect x="422.3" y="4.9" width="4.68" height="4.95" fill="#050506"/><rect x="432.6" y="4.9" width="4.16" height="4.95" fill="#050506"/><rect x="442.4" y="4.9" width="4.68" height="4.95" fill="#050506"/><rect x="462.4" y="4.9" width="4.68" height="4.95" fill="#000"/><rect x="467.1" y="4.9" width="4.68" height="4.95" fill="#000"/><rect x="482.5" y="4.9" width="4.85" height="4.95" fill="#000"/><rect x="487.3" y="4.9" width="4.85" height="4.95" fill="#000"/><rect x="492.1" y="4.9" width="4.85" height="4.95" fill="#000"/><rect x="338.0" y="9.8" width="4.16" height="4.95" fill="#222529"/><rect x="352.4" y="9.8" width="4.68" height="4.95" fill="#050506"/><rect x="357.0" y="9.8" width="4.68" height="4.95" fill="#222529"/><rect x="372.5" y="9.8" width="4.68" height="4.95" fill="#1b1d21"/><rect x="412.6" y="9.8" width="4.68" height="4.95" fill="#1b1d21"/><rect x="427.5" y="9.8" width="4.68" height="4.95" fill="#000"/><rect x="432.1" y="9.8" width="4.68" height="4.95" fill="#000"/><rect x="462.4" y="9.8" width="4.85" height="4.95" fill="#050506"/><rect x="467.2" y="9.8" width="4.85" height="4.95" fill="#000"/><rect x="472.0" y="9.8" width="4.85" height="4.95" fill="#222529"/><rect x="487.6" y="9.8" width="4.68" height="4.95" fill="#000"/><rect x="492.3" y="9.8" width="4.68" height="4.95" fill="#000"/><rect x="347.3" y="14.7" width="4.85" height="4.95" fill="#1b1d21"/><rect x="352.1" y="14.7" width="4.85" height="4.95" fill="#000"/><rect x="356.9" y="14.7" width="4.85" height="4.95" fill="#222529"/><rect x="367.3" y="14.7" width="4.93" height="4.95" fill="#000"/><rect x="372.2" y="14.7" width="4.93" height="4.95" fill="#000"/><rect x="382.2" y="14.7" width="4.93" height="4.95" fill="#1b1d21"/><rect x="387.1" y="14.7" width="4.93" height="4.95" fill="#000"/><rect x="397.6" y="14.7" width="4.16" height="4.95" fill="#000"/><rect x="412.6" y="14.7" width="4.68" height="4.95" fill="#050506"/><rect x="422.3" y="14.7" width="5.02" height="4.95" fill="#000"/><rect x="427.3" y="14.7" width="5.02" height="4.95" fill="#050506"/><rect x="432.3" y="14.7" width="5.02" height="4.95" fill="#1b1d21"/><rect x="437.2" y="14.7" width="5.02" height="4.95" fill="#222529"/><rect x="442.2" y="14.7" width="5.02" height="4.95" fill="#1b1d21"/><rect x="447.2" y="14.7" width="5.02" height="4.95" fill="#222529"/><rect x="472.7" y="14.7" width="4.68" height="4.95" fill="#000"/><rect x="477.3" y="14.7" width="4.68" height="4.95" fill="#000"/><rect x="497.4" y="14.7" width="4.68" height="4.95" fill="#1b1d21"/><rect x="338.0" y="19.6" width="4.81" height="4.95" fill="#050506"/><rect x="342.8" y="19.6" width="4.81" height="4.95" fill="#050506"/><rect x="347.5" y="19.6" width="4.81" height="4.95" fill="#222529"/><rect x="352.3" y="19.6" width="4.81" height="4.95" fill="#000"/><rect x="372.5" y="19.6" width="4.85" height="4.95" fill="#000"/><rect x="377.2" y="19.6" width="4.85" height="4.95" fill="#050506"/><rect x="382.0" y="19.6" width="4.85" height="4.95" fill="#000"/><rect x="392.5" y="19.6" width="4.68" height="4.95" fill="#000"/><rect x="407.4" y="19.6" width="4.93" height="4.95" fill="#000"/><rect x="412.3" y="19.6" width="4.93" height="4.95" fill="#222529"/><rect x="427.5" y="19.6" width="4.68" height="4.95" fill="#050506"/><rect x="477.9" y="19.6" width="4.16" height="4.95" fill="#1b1d21"/><rect x="492.3" y="19.6" width="4.93" height="4.95" fill="#000"/><rect x="497.1" y="19.6" width="4.93" height="4.95" fill="#000"/><rect x="347.3" y="24.5" width="4.99" height="4.95" fill="#050506"/><rect x="352.2" y="24.5" width="4.99" height="4.95" fill="#1b1d21"/><rect x="357.1" y="24.5" width="4.99" height="4.95" fill="#050506"/><rect x="362.1" y="24.5" width="4.99" height="4.95" fill="#1b1d21"/><rect x="367.0" y="24.5" width="4.99" height="4.95" fill="#222529"/><rect x="377.6" y="24.5" width="4.68" height="4.95" fill="#1b1d21"/><rect x="397.6" y="24.5" width="4.16" height="4.95" fill="#000"/><rect x="412.6" y="24.5" width="4.68" height="4.95" fill="#1b1d21"/><rect x="427.5" y="24.5" width="4.68" height="4.95" fill="#1b1d21"/><rect x="432.1" y="24.5" width="4.68" height="4.95" fill="#000"/><rect x="447.5" y="24.5" width="4.68" height="4.95" fill="#000"/><rect x="457.3" y="24.5" width="5.19" height="4.95" fill="#050506"/><rect x="467.6" y="24.5" width="4.68" height="4.95" fill="#000"/><rect x="472.2" y="24.5" width="4.68" height="4.95" fill="#000"/><rect x="338.0" y="29.4" width="4.16" height="4.95" fill="#050506"/><rect x="357.5" y="29.4" width="4.68" height="4.95" fill="#1b1d21"/><rect x="362.2" y="29.4" width="4.68" height="4.95" fill="#222529"/><rect x="387.4" y="29.4" width="4.68" height="4.95" fill="#222529"/><rect x="392.0" y="29.4" width="4.68" height="4.95" fill="#1b1d21"/><rect x="402.3" y="29.4" width="4.93" height="4.95" fill="#000"/><rect x="407.2" y="29.4" width="4.93" height="4.95" fill="#222529"/><rect x="437.8" y="29.4" width="4.68" height="4.95" fill="#222529"/><rect x="442.4" y="29.4" width="4.68" height="4.95" fill="#222529"/><rect x="462.4" y="29.4" width="4.16" height="4.95" fill="#050506"/><rect x="477.9" y="29.4" width="4.16" height="4.95" fill="#222529"/><rect x="338.0" y="34.3" width="4.68" height="4.95" fill="#222529"/><rect x="342.6" y="34.3" width="4.68" height="4.95" fill="#000"/><rect x="347.3" y="34.3" width="4.68" height="4.95" fill="#000"/><rect x="367.3" y="34.3" width="4.68" height="4.95" fill="#222529"/><rect x="382.2" y="34.3" width="4.68" height="4.95" fill="#000"/><rect x="392.5" y="34.3" width="4.68" height="4.95" fill="#000"/><rect x="407.4" y="34.3" width="4.68" height="4.95" fill="#000"/><rect x="422.3" y="34.3" width="4.68" height="4.95" fill="#050506"/><rect x="432.6" y="34.3" width="4.16" height="4.95" fill="#000"/><rect x="442.4" y="34.3" width="5.02" height="4.95" fill="#1b1d21"/><rect x="447.4" y="34.3" width="5.02" height="4.95" fill="#1b1d21"/><rect x="452.3" y="34.3" width="5.02" height="4.95" fill="#000"/><rect x="462.4" y="34.3" width="4.16" height="4.95" fill="#050506"/><rect x="472.7" y="34.3" width="4.16" height="4.95" fill="#1b1d21"/><rect x="482.5" y="34.3" width="4.93" height="4.95" fill="#222529"/><rect x="487.4" y="34.3" width="4.93" height="4.95" fill="#000"/><rect x="338.0" y="39.2" width="4.16" height="4.95" fill="#000"/><rect x="347.3" y="39.2" width="4.93" height="4.95" fill="#050506"/><rect x="352.1" y="39.2" width="4.93" height="4.95" fill="#222529"/><rect x="357.0" y="39.2" width="4.93" height="4.95" fill="#050506"/><rect x="361.9" y="39.2" width="4.93" height="4.95" fill="#000"/><rect x="382.2" y="39.2" width="4.68" height="4.95" fill="#000"/><rect x="402.3" y="39.2" width="4.68" height="4.95" fill="#000"/><rect x="422.3" y="39.2" width="4.68" height="4.95" fill="#000"/><rect x="432.6" y="39.2" width="4.85" height="4.95" fill="#1b1d21"/><rect x="437.4" y="39.2" width="4.85" height="4.95" fill="#050506"/><rect x="442.2" y="39.2" width="4.85" height="4.95" fill="#222529"/><rect x="462.4" y="39.2" width="4.68" height="4.95" fill="#222529"/><rect x="467.1" y="39.2" width="4.68" height="4.95" fill="#222529"/><rect x="487.6" y="39.2" width="4.85" height="4.95" fill="#000"/><rect x="492.4" y="39.2" width="4.85" height="4.95" fill="#050506"/><rect x="497.2" y="39.2" width="4.85" height="4.95" fill="#222529"/><rect x="347.3" y="44.1" width="4.93" height="4.95" fill="#222529"/><rect x="352.1" y="44.1" width="4.93" height="4.95" fill="#222529"/><rect x="357.0" y="44.1" width="4.93" height="4.95" fill="#222529"/><rect x="361.9" y="44.1" width="4.93" height="4.95" fill="#000"/><rect x="382.2" y="44.1" width="4.68" height="4.95" fill="#050506"/><rect x="402.3" y="44.1" width="4.68" height="4.95" fill="#050506"/><rect x="422.3" y="44.1" width="4.68" height="4.95" fill="#1b1d21"/><rect x="432.6" y="44.1" width="4.85" height="4.95" fill="#050506"/><rect x="437.4" y="44.1" width="4.85" height="4.95" fill="#050506"/><rect x="442.2" y="44.1" width="4.85" height="4.95" fill="#000"/><rect x="462.4" y="44.1" width="4.68" height="4.95" fill="#000"/><rect x="467.1" y="44.1" width="4.68" height="4.95" fill="#222529"/><rect x="497.4" y="44.1" width="4.68" height="4.95" fill="#222529"/></svg></div>
</div>
<div id="wpL2" class="abs"></div><div id="wpT2" class="abs"></div><div id="wpB2w" class="abs"><div id="wpB2" class="abs"></div></div>
<div id="redbox" class="abs"></div>
<div id="tip0" class="abs">Use $0 in the console to refer to this element.</div>
<div class="abs" style="left:620px;top:283px;width:5px;height:141px;background:#f24115"></div>
<svg class="abs" style="left:0;top:0" width="700" height="430" viewBox="0 0 700 430"><g fill="#3cc69c">
<path d="M603.5 181.6L597.7 176.4L521.9 266.1L516.4 261.2L505.8 289.8L533.3 276.3L527.8 271.4Z"/>
<path d="M110.2 348.4L204 341.1L202.6 333.4L230.8 342.4L204.2 355.8L204.1 348.2L110.2 355.3Z"/>
</g></svg>
<div id="itip" class="abs"><div class="nm"><span style="color:#881280">a</span>.tm-button.style-flat-rounded.t
m-button-nm.tm-button-custom.
smooth-scroll-link</div><div class="dm">194.03 × 55</div></div>
<svg class="abs" style="left:1148px;top:124px" width="18" height="10" viewBox="0 0 18 10"><path d="M1.5 0.5L9 8.6L16.5 0.5Z" fill="#fff"/></svg>
<div id="hl" class="abs">
<div class="abs" style="left:0;top:0;width:194px;height:55px;border-radius:27.5px;background:linear-gradient(90deg,#b0b84e 0,#b0b84e 36px,#8f9e9a 36px,#93979f 100px,#9690a8 158px,#b4965a 158px,#b4965a 194px)"></div>
<div class="abs" style="left:36px;top:0;width:122px;height:55px;background:linear-gradient(90deg,#8f9e9a 0,#93979f 64px,#9690a8 122px)"></div>
<div class="abs" style="left:36.3px;top:0;width:124px;height:55px;line-height:55px;font-weight:bold;font-size:14px;letter-spacing:.82px;color:#8cb6ec;white-space:pre">FIND OUT MORE</div>
</div>
</body></html>
